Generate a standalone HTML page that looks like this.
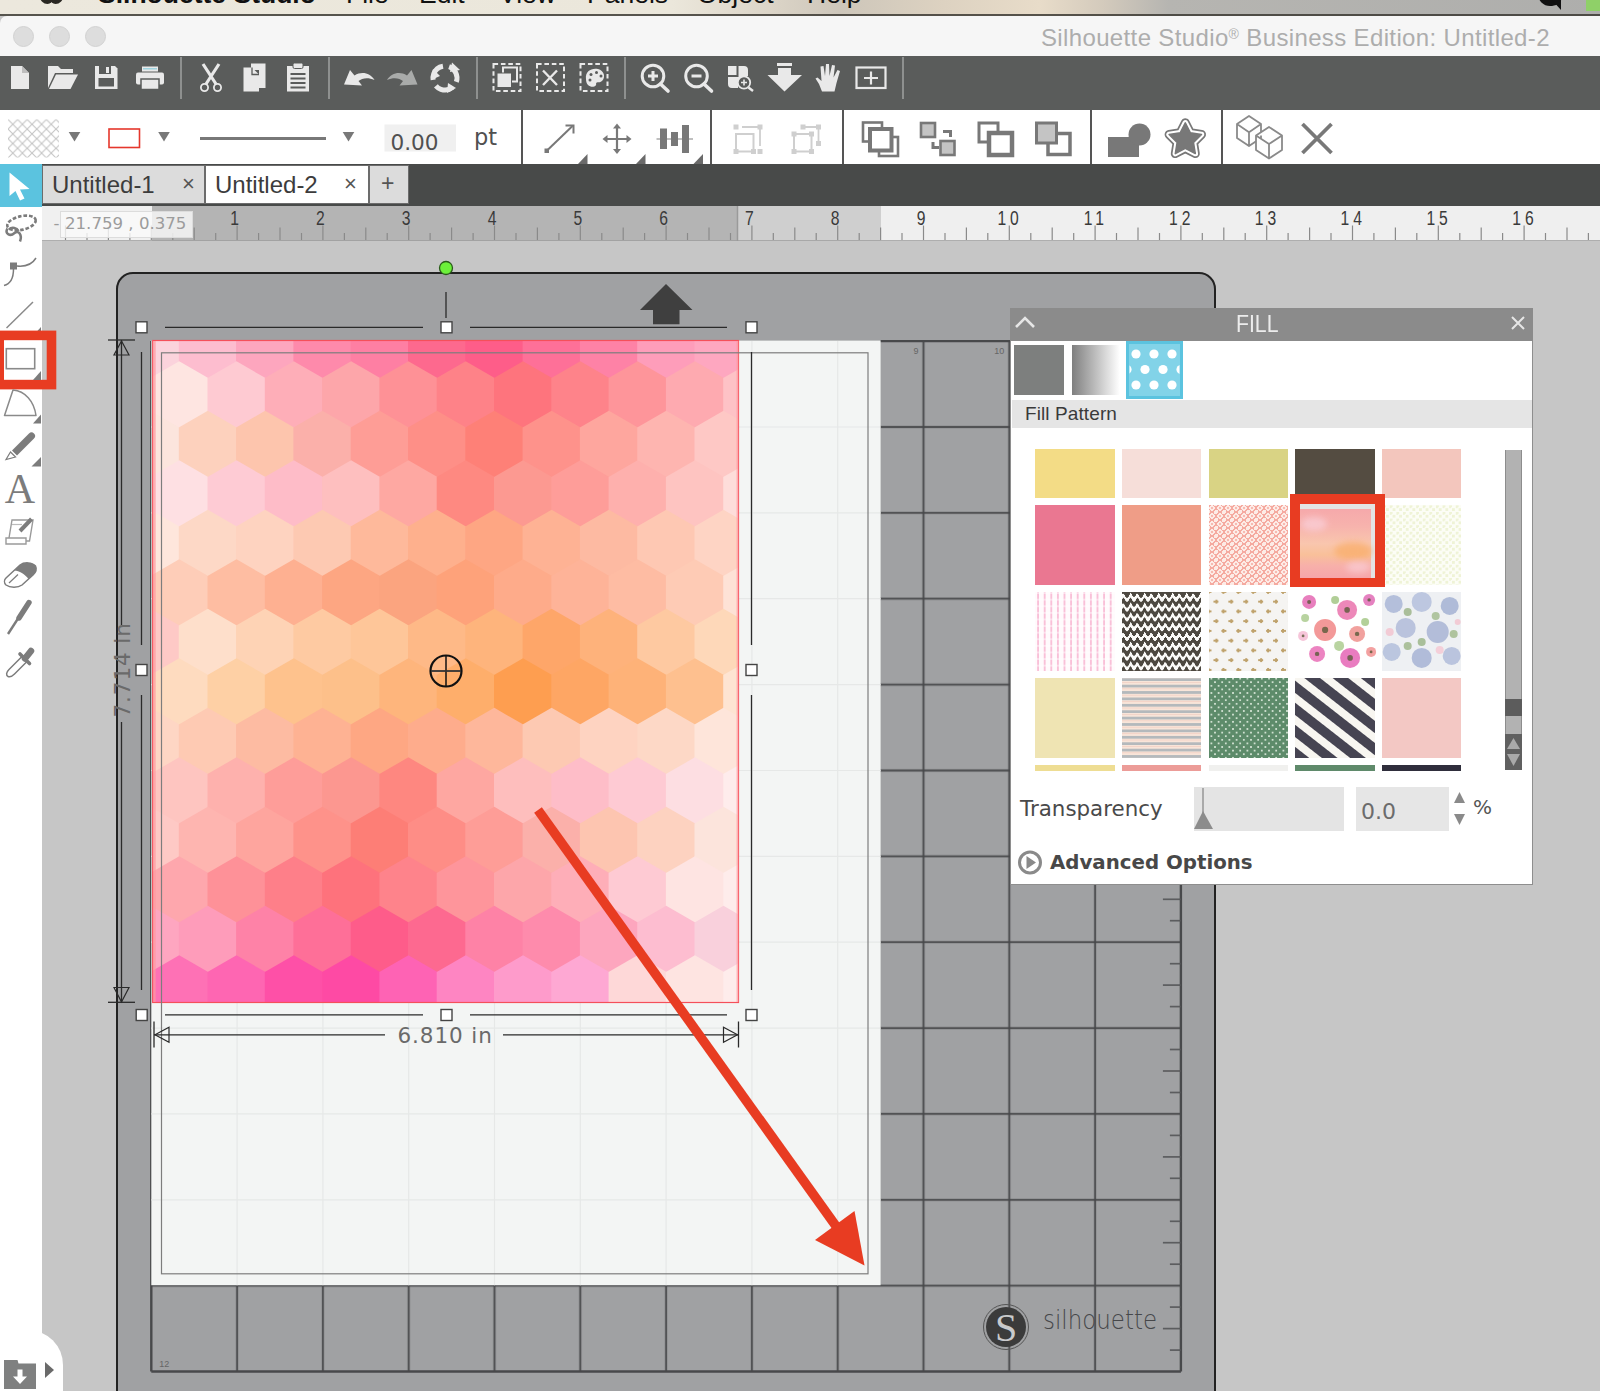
<!DOCTYPE html><html><head><meta charset="utf-8"><title>Silhouette Studio</title><style>
*{margin:0;padding:0;box-sizing:border-box}
html,body{width:1600px;height:1391px;overflow:hidden;background:#c6c6c6;font-family:"Liberation Sans",sans-serif}
#root{position:relative;width:1600px;height:1391px;overflow:hidden;background:#c6c6c6}
.abs{position:absolute}
.t{position:absolute;white-space:nowrap;line-height:1}
</style></head><body><div id="root">
<div class="abs" style="left:116.2px;top:272.4px;width:1100px;height:1200px;background:#a0a1a3;border:2.6px solid #222;border-radius:17px"></div>
<svg class="abs" style="left:0;top:0" width="1600" height="1391" viewBox="0 0 1600 1391">
<line x1="151.3" y1="341.1" x2="151.3" y2="1371.5" stroke="#48494b" stroke-width="2.4" opacity="1"/>
<line x1="151.3" y1="341.1" x2="1180.9" y2="341.1" stroke="#48494b" stroke-width="2.4" opacity="1"/>
<line x1="237.1" y1="341.1" x2="237.1" y2="1371.5" stroke="#48494b" stroke-width="1.8" opacity="0.85"/>
<line x1="151.3" y1="427.0" x2="1180.9" y2="427.0" stroke="#48494b" stroke-width="1.8" opacity="0.85"/>
<line x1="322.9" y1="341.1" x2="322.9" y2="1371.5" stroke="#48494b" stroke-width="1.8" opacity="0.85"/>
<line x1="151.3" y1="512.8" x2="1180.9" y2="512.8" stroke="#48494b" stroke-width="1.8" opacity="0.85"/>
<line x1="408.7" y1="341.1" x2="408.7" y2="1371.5" stroke="#48494b" stroke-width="1.8" opacity="0.85"/>
<line x1="151.3" y1="598.7" x2="1180.9" y2="598.7" stroke="#48494b" stroke-width="1.8" opacity="0.85"/>
<line x1="494.5" y1="341.1" x2="494.5" y2="1371.5" stroke="#48494b" stroke-width="1.8" opacity="0.85"/>
<line x1="151.3" y1="684.6" x2="1180.9" y2="684.6" stroke="#48494b" stroke-width="1.8" opacity="0.85"/>
<line x1="580.3" y1="341.1" x2="580.3" y2="1371.5" stroke="#48494b" stroke-width="1.8" opacity="0.85"/>
<line x1="151.3" y1="770.5" x2="1180.9" y2="770.5" stroke="#48494b" stroke-width="1.8" opacity="0.85"/>
<line x1="666.1" y1="341.1" x2="666.1" y2="1371.5" stroke="#48494b" stroke-width="1.8" opacity="0.85"/>
<line x1="151.3" y1="856.3" x2="1180.9" y2="856.3" stroke="#48494b" stroke-width="1.8" opacity="0.85"/>
<line x1="751.9" y1="341.1" x2="751.9" y2="1371.5" stroke="#48494b" stroke-width="1.8" opacity="0.85"/>
<line x1="151.3" y1="942.2" x2="1180.9" y2="942.2" stroke="#48494b" stroke-width="1.8" opacity="0.85"/>
<line x1="837.7" y1="341.1" x2="837.7" y2="1371.5" stroke="#48494b" stroke-width="1.8" opacity="0.85"/>
<line x1="151.3" y1="1028.1" x2="1180.9" y2="1028.1" stroke="#48494b" stroke-width="1.8" opacity="0.85"/>
<line x1="923.5" y1="341.1" x2="923.5" y2="1371.5" stroke="#48494b" stroke-width="1.8" opacity="0.85"/>
<line x1="151.3" y1="1113.9" x2="1180.9" y2="1113.9" stroke="#48494b" stroke-width="1.8" opacity="0.85"/>
<line x1="1009.3" y1="341.1" x2="1009.3" y2="1371.5" stroke="#48494b" stroke-width="1.8" opacity="0.85"/>
<line x1="151.3" y1="1199.8" x2="1180.9" y2="1199.8" stroke="#48494b" stroke-width="1.8" opacity="0.85"/>
<line x1="1095.1" y1="341.1" x2="1095.1" y2="1371.5" stroke="#48494b" stroke-width="1.8" opacity="0.85"/>
<line x1="151.3" y1="1285.7" x2="1180.9" y2="1285.7" stroke="#48494b" stroke-width="1.8" opacity="0.85"/>
<line x1="1180.9" y1="341.1" x2="1180.9" y2="1371.5" stroke="#48494b" stroke-width="2.4" opacity="1"/>
<line x1="151.3" y1="1371.5" x2="1180.9" y2="1371.5" stroke="#48494b" stroke-width="2.4" opacity="1"/>
<line x1="237.1" y1="341.1" x2="237.1" y2="1371.5" stroke="#48494b" stroke-width="3.6" opacity=".16"/>
<line x1="151.3" y1="427.0" x2="1180.9" y2="427.0" stroke="#48494b" stroke-width="3.6" opacity=".16"/>
<line x1="322.9" y1="341.1" x2="322.9" y2="1371.5" stroke="#48494b" stroke-width="3.6" opacity=".16"/>
<line x1="151.3" y1="512.8" x2="1180.9" y2="512.8" stroke="#48494b" stroke-width="3.6" opacity=".16"/>
<line x1="408.7" y1="341.1" x2="408.7" y2="1371.5" stroke="#48494b" stroke-width="3.6" opacity=".16"/>
<line x1="151.3" y1="598.7" x2="1180.9" y2="598.7" stroke="#48494b" stroke-width="3.6" opacity=".16"/>
<line x1="494.5" y1="341.1" x2="494.5" y2="1371.5" stroke="#48494b" stroke-width="3.6" opacity=".16"/>
<line x1="151.3" y1="684.6" x2="1180.9" y2="684.6" stroke="#48494b" stroke-width="3.6" opacity=".16"/>
<line x1="580.3" y1="341.1" x2="580.3" y2="1371.5" stroke="#48494b" stroke-width="3.6" opacity=".16"/>
<line x1="151.3" y1="770.5" x2="1180.9" y2="770.5" stroke="#48494b" stroke-width="3.6" opacity=".16"/>
<line x1="666.1" y1="341.1" x2="666.1" y2="1371.5" stroke="#48494b" stroke-width="3.6" opacity=".16"/>
<line x1="151.3" y1="856.3" x2="1180.9" y2="856.3" stroke="#48494b" stroke-width="3.6" opacity=".16"/>
<line x1="751.9" y1="341.1" x2="751.9" y2="1371.5" stroke="#48494b" stroke-width="3.6" opacity=".16"/>
<line x1="151.3" y1="942.2" x2="1180.9" y2="942.2" stroke="#48494b" stroke-width="3.6" opacity=".16"/>
<line x1="837.7" y1="341.1" x2="837.7" y2="1371.5" stroke="#48494b" stroke-width="3.6" opacity=".16"/>
<line x1="151.3" y1="1028.1" x2="1180.9" y2="1028.1" stroke="#48494b" stroke-width="3.6" opacity=".16"/>
<line x1="923.5" y1="341.1" x2="923.5" y2="1371.5" stroke="#48494b" stroke-width="3.6" opacity=".16"/>
<line x1="151.3" y1="1113.9" x2="1180.9" y2="1113.9" stroke="#48494b" stroke-width="3.6" opacity=".16"/>
<line x1="1009.3" y1="341.1" x2="1009.3" y2="1371.5" stroke="#48494b" stroke-width="3.6" opacity=".16"/>
<line x1="151.3" y1="1199.8" x2="1180.9" y2="1199.8" stroke="#48494b" stroke-width="3.6" opacity=".16"/>
<line x1="1095.1" y1="341.1" x2="1095.1" y2="1371.5" stroke="#48494b" stroke-width="3.6" opacity=".16"/>
<line x1="151.3" y1="1285.7" x2="1180.9" y2="1285.7" stroke="#48494b" stroke-width="3.6" opacity=".16"/>
<line x1="1169.9" y1="362.6" x2="1180.9" y2="362.6" stroke="#555658" stroke-width="1.7" opacity=".9"/>
<line x1="1162.9" y1="384.0" x2="1180.9" y2="384.0" stroke="#555658" stroke-width="1.7" opacity=".9"/>
<line x1="1169.9" y1="405.5" x2="1180.9" y2="405.5" stroke="#555658" stroke-width="1.7" opacity=".9"/>
<line x1="1169.9" y1="448.4" x2="1180.9" y2="448.4" stroke="#555658" stroke-width="1.7" opacity=".9"/>
<line x1="1162.9" y1="469.9" x2="1180.9" y2="469.9" stroke="#555658" stroke-width="1.7" opacity=".9"/>
<line x1="1169.9" y1="491.4" x2="1180.9" y2="491.4" stroke="#555658" stroke-width="1.7" opacity=".9"/>
<line x1="1169.9" y1="534.3" x2="1180.9" y2="534.3" stroke="#555658" stroke-width="1.7" opacity=".9"/>
<line x1="1162.9" y1="555.8" x2="1180.9" y2="555.8" stroke="#555658" stroke-width="1.7" opacity=".9"/>
<line x1="1169.9" y1="577.2" x2="1180.9" y2="577.2" stroke="#555658" stroke-width="1.7" opacity=".9"/>
<line x1="1169.9" y1="620.2" x2="1180.9" y2="620.2" stroke="#555658" stroke-width="1.7" opacity=".9"/>
<line x1="1162.9" y1="641.6" x2="1180.9" y2="641.6" stroke="#555658" stroke-width="1.7" opacity=".9"/>
<line x1="1169.9" y1="663.1" x2="1180.9" y2="663.1" stroke="#555658" stroke-width="1.7" opacity=".9"/>
<line x1="1169.9" y1="706.0" x2="1180.9" y2="706.0" stroke="#555658" stroke-width="1.7" opacity=".9"/>
<line x1="1162.9" y1="727.5" x2="1180.9" y2="727.5" stroke="#555658" stroke-width="1.7" opacity=".9"/>
<line x1="1169.9" y1="749.0" x2="1180.9" y2="749.0" stroke="#555658" stroke-width="1.7" opacity=".9"/>
<line x1="1169.9" y1="791.9" x2="1180.9" y2="791.9" stroke="#555658" stroke-width="1.7" opacity=".9"/>
<line x1="1162.9" y1="813.4" x2="1180.9" y2="813.4" stroke="#555658" stroke-width="1.7" opacity=".9"/>
<line x1="1169.9" y1="834.9" x2="1180.9" y2="834.9" stroke="#555658" stroke-width="1.7" opacity=".9"/>
<line x1="1169.9" y1="877.8" x2="1180.9" y2="877.8" stroke="#555658" stroke-width="1.7" opacity=".9"/>
<line x1="1162.9" y1="899.3" x2="1180.9" y2="899.3" stroke="#555658" stroke-width="1.7" opacity=".9"/>
<line x1="1169.9" y1="920.7" x2="1180.9" y2="920.7" stroke="#555658" stroke-width="1.7" opacity=".9"/>
<line x1="1169.9" y1="963.7" x2="1180.9" y2="963.7" stroke="#555658" stroke-width="1.7" opacity=".9"/>
<line x1="1162.9" y1="985.1" x2="1180.9" y2="985.1" stroke="#555658" stroke-width="1.7" opacity=".9"/>
<line x1="1169.9" y1="1006.6" x2="1180.9" y2="1006.6" stroke="#555658" stroke-width="1.7" opacity=".9"/>
<line x1="1169.9" y1="1049.5" x2="1180.9" y2="1049.5" stroke="#555658" stroke-width="1.7" opacity=".9"/>
<line x1="1162.9" y1="1071.0" x2="1180.9" y2="1071.0" stroke="#555658" stroke-width="1.7" opacity=".9"/>
<line x1="1169.9" y1="1092.5" x2="1180.9" y2="1092.5" stroke="#555658" stroke-width="1.7" opacity=".9"/>
<line x1="1169.9" y1="1135.4" x2="1180.9" y2="1135.4" stroke="#555658" stroke-width="1.7" opacity=".9"/>
<line x1="1162.9" y1="1156.9" x2="1180.9" y2="1156.9" stroke="#555658" stroke-width="1.7" opacity=".9"/>
<line x1="1169.9" y1="1178.3" x2="1180.9" y2="1178.3" stroke="#555658" stroke-width="1.7" opacity=".9"/>
<line x1="1169.9" y1="1221.3" x2="1180.9" y2="1221.3" stroke="#555658" stroke-width="1.7" opacity=".9"/>
<line x1="1162.9" y1="1242.7" x2="1180.9" y2="1242.7" stroke="#555658" stroke-width="1.7" opacity=".9"/>
<line x1="1169.9" y1="1264.2" x2="1180.9" y2="1264.2" stroke="#555658" stroke-width="1.7" opacity=".9"/>
<line x1="1169.9" y1="1307.1" x2="1180.9" y2="1307.1" stroke="#555658" stroke-width="1.7" opacity=".9"/>
<line x1="1162.9" y1="1328.6" x2="1180.9" y2="1328.6" stroke="#555658" stroke-width="1.7" opacity=".9"/>
<line x1="1169.9" y1="1350.1" x2="1180.9" y2="1350.1" stroke="#555658" stroke-width="1.7" opacity=".9"/>
<text x="232.1" y="354.1" font-size="9" fill="#666" text-anchor="end" font-family="Liberation Sans, sans-serif">1</text>
<text x="317.9" y="354.1" font-size="9" fill="#666" text-anchor="end" font-family="Liberation Sans, sans-serif">2</text>
<text x="403.7" y="354.1" font-size="9" fill="#666" text-anchor="end" font-family="Liberation Sans, sans-serif">3</text>
<text x="489.5" y="354.1" font-size="9" fill="#666" text-anchor="end" font-family="Liberation Sans, sans-serif">4</text>
<text x="575.3" y="354.1" font-size="9" fill="#666" text-anchor="end" font-family="Liberation Sans, sans-serif">5</text>
<text x="661.1" y="354.1" font-size="9" fill="#666" text-anchor="end" font-family="Liberation Sans, sans-serif">6</text>
<text x="746.9" y="354.1" font-size="9" fill="#666" text-anchor="end" font-family="Liberation Sans, sans-serif">7</text>
<text x="832.7" y="354.1" font-size="9" fill="#666" text-anchor="end" font-family="Liberation Sans, sans-serif">8</text>
<text x="918.5" y="354.1" font-size="9" fill="#666" text-anchor="end" font-family="Liberation Sans, sans-serif">9</text>
<text x="1004.3" y="354.1" font-size="9" fill="#666" text-anchor="end" font-family="Liberation Sans, sans-serif">10</text>
<text x="1090.1" y="354.1" font-size="9" fill="#666" text-anchor="end" font-family="Liberation Sans, sans-serif">11</text>
<text x="1175.9" y="354.1" font-size="9" fill="#666" text-anchor="end" font-family="Liberation Sans, sans-serif">12</text>
<text x="159.3" y="422.0" font-size="9" fill="#666" font-family="Liberation Sans, sans-serif">1</text>
<text x="159.3" y="507.8" font-size="9" fill="#666" font-family="Liberation Sans, sans-serif">2</text>
<text x="159.3" y="593.7" font-size="9" fill="#666" font-family="Liberation Sans, sans-serif">3</text>
<text x="159.3" y="679.6" font-size="9" fill="#666" font-family="Liberation Sans, sans-serif">4</text>
<text x="159.3" y="765.5" font-size="9" fill="#666" font-family="Liberation Sans, sans-serif">5</text>
<text x="159.3" y="851.3" font-size="9" fill="#666" font-family="Liberation Sans, sans-serif">6</text>
<text x="159.3" y="937.2" font-size="9" fill="#666" font-family="Liberation Sans, sans-serif">7</text>
<text x="159.3" y="1023.1" font-size="9" fill="#666" font-family="Liberation Sans, sans-serif">8</text>
<text x="159.3" y="1108.9" font-size="9" fill="#666" font-family="Liberation Sans, sans-serif">9</text>
<text x="159.3" y="1194.8" font-size="9" fill="#666" font-family="Liberation Sans, sans-serif">10</text>
<text x="159.3" y="1280.7" font-size="9" fill="#666" font-family="Liberation Sans, sans-serif">11</text>
<text x="159.3" y="1366.5" font-size="9" fill="#666" font-family="Liberation Sans, sans-serif">12</text>
<rect x="151.3" y="340.3" width="729.3" height="944.9" fill="#f3f5f4"/>
<line x1="237.1" y1="341.1" x2="237.1" y2="1285.2" stroke="#e6e8e7" stroke-width="1.2"/>
<line x1="322.9" y1="341.1" x2="322.9" y2="1285.2" stroke="#e6e8e7" stroke-width="1.2"/>
<line x1="408.7" y1="341.1" x2="408.7" y2="1285.2" stroke="#e6e8e7" stroke-width="1.2"/>
<line x1="494.5" y1="341.1" x2="494.5" y2="1285.2" stroke="#e6e8e7" stroke-width="1.2"/>
<line x1="580.3" y1="341.1" x2="580.3" y2="1285.2" stroke="#e6e8e7" stroke-width="1.2"/>
<line x1="666.1" y1="341.1" x2="666.1" y2="1285.2" stroke="#e6e8e7" stroke-width="1.2"/>
<line x1="751.9" y1="341.1" x2="751.9" y2="1285.2" stroke="#e6e8e7" stroke-width="1.2"/>
<line x1="837.7" y1="341.1" x2="837.7" y2="1285.2" stroke="#e6e8e7" stroke-width="1.2"/>
<line x1="151.3" y1="427.0" x2="880.6" y2="427.0" stroke="#e6e8e7" stroke-width="1.2"/>
<line x1="151.3" y1="512.8" x2="880.6" y2="512.8" stroke="#e6e8e7" stroke-width="1.2"/>
<line x1="151.3" y1="598.7" x2="880.6" y2="598.7" stroke="#e6e8e7" stroke-width="1.2"/>
<line x1="151.3" y1="684.6" x2="880.6" y2="684.6" stroke="#e6e8e7" stroke-width="1.2"/>
<line x1="151.3" y1="770.5" x2="880.6" y2="770.5" stroke="#e6e8e7" stroke-width="1.2"/>
<line x1="151.3" y1="856.3" x2="880.6" y2="856.3" stroke="#e6e8e7" stroke-width="1.2"/>
<line x1="151.3" y1="942.2" x2="880.6" y2="942.2" stroke="#e6e8e7" stroke-width="1.2"/>
<line x1="151.3" y1="1028.1" x2="880.6" y2="1028.1" stroke="#e6e8e7" stroke-width="1.2"/>
<line x1="151.3" y1="1113.9" x2="880.6" y2="1113.9" stroke="#e6e8e7" stroke-width="1.2"/>
<line x1="151.3" y1="1199.8" x2="880.6" y2="1199.8" stroke="#e6e8e7" stroke-width="1.2"/>
<defs><clipPath id="pc"><rect x="152.2" y="340.0" width="586.8" height="663.0"/></clipPath></defs>
<g clip-path="url(#pc)" shape-rendering="geometricPrecision">
<rect x="152.2" y="340.0" width="586.8" height="663.0" fill="#feb0a0"/>
<polygon points="150.5,311.8 179.5,328.6 179.5,362.0 150.5,378.8 121.5,362.0 121.5,328.6" fill="#fbd3dc"/>
<polygon points="207.8,311.8 236.8,328.6 236.8,362.0 207.8,378.8 178.8,362.0 178.8,328.6" fill="#fdbdcf"/>
<polygon points="265.1,311.8 294.1,328.6 294.1,362.0 265.1,378.8 236.1,362.0 236.1,328.6" fill="#fda6be"/>
<polygon points="322.4,311.8 351.4,328.6 351.4,362.0 322.4,378.8 293.4,362.0 293.4,328.6" fill="#fe8aab"/>
<polygon points="379.7,311.8 408.7,328.6 408.7,362.0 379.7,378.8 350.7,362.0 350.7,328.6" fill="#fe7fa3"/>
<polygon points="437.0,311.8 466.0,328.6 466.0,362.0 437.0,378.8 408.0,362.0 408.0,328.6" fill="#fd698e"/>
<polygon points="494.3,311.8 523.3,328.6 523.3,362.0 494.3,378.8 465.3,362.0 465.3,328.6" fill="#fe5d89"/>
<polygon points="551.6,311.8 580.6,328.6 580.6,362.0 551.6,378.8 522.6,362.0 522.6,328.6" fill="#fe7098"/>
<polygon points="608.9,311.8 637.9,328.6 637.9,362.0 608.9,378.8 579.9,362.0 579.9,328.6" fill="#fe82a6"/>
<polygon points="666.2,311.8 695.2,328.6 695.2,362.0 666.2,378.8 637.2,362.0 637.2,328.6" fill="#fe9dba"/>
<polygon points="723.5,311.8 752.5,328.6 752.5,362.0 723.5,378.8 694.5,362.0 694.5,328.6" fill="#fea7c0"/>
<polygon points="179.2,361.3 208.2,378.1 208.2,411.5 179.2,428.3 150.2,411.5 150.2,378.1" fill="#fee5e1"/>
<polygon points="236.5,361.3 265.5,378.1 265.5,411.5 236.5,428.3 207.5,411.5 207.5,378.1" fill="#fecad2"/>
<polygon points="293.8,361.3 322.8,378.1 322.8,411.5 293.8,428.3 264.8,411.5 264.8,378.1" fill="#feaeb8"/>
<polygon points="351.1,361.3 380.1,378.1 380.1,411.5 351.1,428.3 322.1,411.5 322.1,378.1" fill="#fda6aa"/>
<polygon points="408.4,361.3 437.4,378.1 437.4,411.5 408.4,428.3 379.4,411.5 379.4,378.1" fill="#fe9196"/>
<polygon points="465.7,361.3 494.7,378.1 494.7,411.5 465.7,428.3 436.7,411.5 436.7,378.1" fill="#fe8288"/>
<polygon points="523.0,361.3 552.0,378.1 552.0,411.5 523.0,428.3 494.0,411.5 494.0,378.1" fill="#fe747d"/>
<polygon points="580.3,361.3 609.3,378.1 609.3,411.5 580.3,428.3 551.3,411.5 551.3,378.1" fill="#fe838a"/>
<polygon points="637.6,361.3 666.6,378.1 666.6,411.5 637.6,428.3 608.6,411.5 608.6,378.1" fill="#fe959a"/>
<polygon points="694.9,361.3 723.9,378.1 723.9,411.5 694.9,428.3 665.9,411.5 665.9,378.1" fill="#feaab0"/>
<polygon points="752.2,361.3 781.2,378.1 781.2,411.5 752.2,428.3 723.2,411.5 723.2,378.1" fill="#fec2c6"/>
<polygon points="150.5,410.8 179.5,427.6 179.5,461.0 150.5,477.8 121.5,461.0 121.5,427.6" fill="#fce5dd"/>
<polygon points="207.8,410.8 236.8,427.6 236.8,461.0 207.8,477.8 178.8,461.0 178.8,427.6" fill="#fdd1bd"/>
<polygon points="265.1,410.8 294.1,427.6 294.1,461.0 265.1,477.8 236.1,461.0 236.1,427.6" fill="#fdc5ad"/>
<polygon points="322.4,410.8 351.4,427.6 351.4,461.0 322.4,477.8 293.4,461.0 293.4,427.6" fill="#fbb0aa"/>
<polygon points="379.7,410.8 408.7,427.6 408.7,461.0 379.7,477.8 350.7,461.0 350.7,427.6" fill="#fe9d96"/>
<polygon points="437.0,410.8 466.0,427.6 466.0,461.0 437.0,477.8 408.0,461.0 408.0,427.6" fill="#fe8f87"/>
<polygon points="494.3,410.8 523.3,427.6 523.3,461.0 494.3,477.8 465.3,461.0 465.3,427.6" fill="#fe8077"/>
<polygon points="551.6,410.8 580.6,427.6 580.6,461.0 551.6,477.8 522.6,461.0 522.6,427.6" fill="#fe928b"/>
<polygon points="608.9,410.8 637.9,427.6 637.9,461.0 608.9,477.8 579.9,461.0 579.9,427.6" fill="#fea69e"/>
<polygon points="666.2,410.8 695.2,427.6 695.2,461.0 666.2,477.8 637.2,461.0 637.2,427.6" fill="#feb5b0"/>
<polygon points="723.5,410.8 752.5,427.6 752.5,461.0 723.5,477.8 694.5,461.0 694.5,427.6" fill="#fec8c5"/>
<polygon points="179.2,460.3 208.2,477.1 208.2,510.5 179.2,527.3 150.2,510.5 150.2,477.1" fill="#fee0e3"/>
<polygon points="236.5,460.3 265.5,477.1 265.5,510.5 236.5,527.3 207.5,510.5 207.5,477.1" fill="#fecbd4"/>
<polygon points="293.8,460.3 322.8,477.1 322.8,510.5 293.8,527.3 264.8,510.5 264.8,477.1" fill="#febcc8"/>
<polygon points="351.1,460.3 380.1,477.1 380.1,510.5 351.1,527.3 322.1,510.5 322.1,477.1" fill="#febfbf"/>
<polygon points="408.4,460.3 437.4,477.1 437.4,510.5 408.4,527.3 379.4,510.5 379.4,477.1" fill="#fea8a2"/>
<polygon points="465.7,460.3 494.7,477.1 494.7,510.5 465.7,527.3 436.7,510.5 436.7,477.1" fill="#fe8981"/>
<polygon points="523.0,460.3 552.0,477.1 552.0,510.5 523.0,527.3 494.0,510.5 494.0,477.1" fill="#fc9991"/>
<polygon points="580.3,460.3 609.3,477.1 609.3,510.5 580.3,527.3 551.3,510.5 551.3,477.1" fill="#fe9d99"/>
<polygon points="637.6,460.3 666.6,477.1 666.6,510.5 637.6,527.3 608.6,510.5 608.6,477.1" fill="#feb0ad"/>
<polygon points="694.9,460.3 723.9,477.1 723.9,510.5 694.9,527.3 665.9,510.5 665.9,477.1" fill="#fec4c1"/>
<polygon points="752.2,460.3 781.2,477.1 781.2,510.5 752.2,527.3 723.2,510.5 723.2,477.1" fill="#feddda"/>
<polygon points="150.5,509.8 179.5,526.6 179.5,560.0 150.5,576.8 121.5,560.0 121.5,526.6" fill="#fee6dc"/>
<polygon points="207.8,509.8 236.8,526.6 236.8,560.0 207.8,576.8 178.8,560.0 178.8,526.6" fill="#fdd8c6"/>
<polygon points="265.1,509.8 294.1,526.6 294.1,560.0 265.1,576.8 236.1,560.0 236.1,526.6" fill="#fed3c0"/>
<polygon points="322.4,509.8 351.4,526.6 351.4,560.0 322.4,576.8 293.4,560.0 293.4,526.6" fill="#fdc9b2"/>
<polygon points="379.7,509.8 408.7,526.6 408.7,560.0 379.7,576.8 350.7,560.0 350.7,526.6" fill="#feb99b"/>
<polygon points="437.0,509.8 466.0,526.6 466.0,560.0 437.0,576.8 408.0,560.0 408.0,526.6" fill="#feb08d"/>
<polygon points="494.3,509.8 523.3,526.6 523.3,560.0 494.3,576.8 465.3,560.0 465.3,526.6" fill="#fea683"/>
<polygon points="551.6,509.8 580.6,526.6 580.6,560.0 551.6,576.8 522.6,560.0 522.6,526.6" fill="#feb294"/>
<polygon points="608.9,509.8 637.9,526.6 637.9,560.0 608.9,576.8 579.9,560.0 579.9,526.6" fill="#fdbaa2"/>
<polygon points="666.2,509.8 695.2,526.6 695.2,560.0 666.2,576.8 637.2,560.0 637.2,526.6" fill="#fec8b3"/>
<polygon points="723.5,509.8 752.5,526.6 752.5,560.0 723.5,576.8 694.5,560.0 694.5,526.6" fill="#fed4c4"/>
<polygon points="179.2,559.3 208.2,576.1 208.2,609.5 179.2,626.3 150.2,609.5 150.2,576.1" fill="#fecdb8"/>
<polygon points="236.5,559.3 265.5,576.1 265.5,609.5 236.5,626.3 207.5,609.5 207.5,576.1" fill="#febda2"/>
<polygon points="293.8,559.3 322.8,576.1 322.8,609.5 293.8,626.3 264.8,609.5 264.8,576.1" fill="#feb091"/>
<polygon points="351.1,559.3 380.1,576.1 380.1,609.5 351.1,626.3 322.1,609.5 322.1,576.1" fill="#fda682"/>
<polygon points="408.4,559.3 437.4,576.1 437.4,609.5 408.4,626.3 379.4,609.5 379.4,576.1" fill="#fba47f"/>
<polygon points="465.7,559.3 494.7,576.1 494.7,609.5 465.7,626.3 436.7,609.5 436.7,576.1" fill="#fea27a"/>
<polygon points="523.0,559.3 552.0,576.1 552.0,609.5 523.0,626.3 494.0,609.5 494.0,576.1" fill="#feab8a"/>
<polygon points="580.3,559.3 609.3,576.1 609.3,609.5 580.3,626.3 551.3,609.5 551.3,576.1" fill="#feb398"/>
<polygon points="637.6,559.3 666.6,576.1 666.6,609.5 637.6,626.3 608.6,609.5 608.6,576.1" fill="#febca3"/>
<polygon points="694.9,559.3 723.9,576.1 723.9,609.5 694.9,626.3 665.9,609.5 665.9,576.1" fill="#fecbb5"/>
<polygon points="752.2,559.3 781.2,576.1 781.2,609.5 752.2,626.3 723.2,609.5 723.2,576.1" fill="#fee2d6"/>
<polygon points="150.5,608.8 179.5,625.6 179.5,659.0 150.5,675.8 121.5,659.0 121.5,625.6" fill="#fec9c6"/>
<polygon points="207.8,608.8 236.8,625.6 236.8,659.0 207.8,675.8 178.8,659.0 178.8,625.6" fill="#fedfcb"/>
<polygon points="265.1,608.8 294.1,625.6 294.1,659.0 265.1,675.8 236.1,659.0 236.1,625.6" fill="#fed3b5"/>
<polygon points="322.4,608.8 351.4,625.6 351.4,659.0 322.4,675.8 293.4,659.0 293.4,625.6" fill="#fecaa2"/>
<polygon points="379.7,608.8 408.7,625.6 408.7,659.0 379.7,675.8 350.7,659.0 350.7,625.6" fill="#fec699"/>
<polygon points="437.0,608.8 466.0,625.6 466.0,659.0 437.0,675.8 408.0,659.0 408.0,625.6" fill="#feb987"/>
<polygon points="494.3,608.8 523.3,625.6 523.3,659.0 494.3,675.8 465.3,659.0 465.3,625.6" fill="#feb47c"/>
<polygon points="551.6,608.8 580.6,625.6 580.6,659.0 551.6,675.8 522.6,659.0 522.6,625.6" fill="#fea669"/>
<polygon points="608.9,608.8 637.9,625.6 637.9,659.0 608.9,675.8 579.9,659.0 579.9,625.6" fill="#feb27b"/>
<polygon points="666.2,608.8 695.2,625.6 695.2,659.0 666.2,675.8 637.2,659.0 637.2,625.6" fill="#fec9a1"/>
<polygon points="723.5,608.8 752.5,625.6 752.5,659.0 723.5,675.8 694.5,659.0 694.5,625.6" fill="#fed8b9"/>
<polygon points="179.2,658.3 208.2,675.1 208.2,708.5 179.2,725.3 150.2,708.5 150.2,675.1" fill="#fedbbf"/>
<polygon points="236.5,658.3 265.5,675.1 265.5,708.5 236.5,725.3 207.5,708.5 207.5,675.1" fill="#fed0a5"/>
<polygon points="293.8,658.3 322.8,675.1 322.8,708.5 293.8,725.3 264.8,708.5 264.8,675.1" fill="#fec28d"/>
<polygon points="351.1,658.3 380.1,675.1 380.1,708.5 351.1,725.3 322.1,708.5 322.1,675.1" fill="#fdc08a"/>
<polygon points="408.4,658.3 437.4,675.1 437.4,708.5 408.4,725.3 379.4,708.5 379.4,675.1" fill="#feb57c"/>
<polygon points="465.7,658.3 494.7,675.1 494.7,708.5 465.7,725.3 436.7,708.5 436.7,675.1" fill="#feae6b"/>
<polygon points="523.0,658.3 552.0,675.1 552.0,708.5 523.0,725.3 494.0,708.5 494.0,675.1" fill="#fe9e50"/>
<polygon points="580.3,658.3 609.3,675.1 609.3,708.5 580.3,725.3 551.3,708.5 551.3,675.1" fill="#fea664"/>
<polygon points="637.6,658.3 666.6,675.1 666.6,708.5 637.6,725.3 608.6,708.5 608.6,675.1" fill="#feb278"/>
<polygon points="694.9,658.3 723.9,675.1 723.9,708.5 694.9,725.3 665.9,708.5 665.9,675.1" fill="#fec08f"/>
<polygon points="752.2,658.3 781.2,675.1 781.2,708.5 752.2,725.3 723.2,708.5 723.2,675.1" fill="#fee4d2"/>
<polygon points="150.5,707.8 179.5,724.6 179.5,758.0 150.5,774.8 121.5,758.0 121.5,724.6" fill="#fed6c4"/>
<polygon points="207.8,707.8 236.8,724.6 236.8,758.0 207.8,774.8 178.8,758.0 178.8,724.6" fill="#fecab3"/>
<polygon points="265.1,707.8 294.1,724.6 294.1,758.0 265.1,774.8 236.1,758.0 236.1,724.6" fill="#fdbba2"/>
<polygon points="322.4,707.8 351.4,724.6 351.4,758.0 322.4,774.8 293.4,758.0 293.4,724.6" fill="#feb293"/>
<polygon points="379.7,707.8 408.7,724.6 408.7,758.0 379.7,774.8 350.7,758.0 350.7,724.6" fill="#fea783"/>
<polygon points="437.0,707.8 466.0,724.6 466.0,758.0 437.0,774.8 408.0,758.0 408.0,724.6" fill="#feac8c"/>
<polygon points="494.3,707.8 523.3,724.6 523.3,758.0 494.3,774.8 465.3,758.0 465.3,724.6" fill="#feb79b"/>
<polygon points="551.6,707.8 580.6,724.6 580.6,758.0 551.6,774.8 522.6,758.0 522.6,724.6" fill="#fdc9b2"/>
<polygon points="608.9,707.8 637.9,724.6 637.9,758.0 608.9,774.8 579.9,758.0 579.9,724.6" fill="#fed3c1"/>
<polygon points="666.2,707.8 695.2,724.6 695.2,758.0 666.2,774.8 637.2,758.0 637.2,724.6" fill="#fdd8c6"/>
<polygon points="723.5,707.8 752.5,724.6 752.5,758.0 723.5,774.8 694.5,758.0 694.5,724.6" fill="#fee5da"/>
<polygon points="179.2,757.3 208.2,774.1 208.2,807.5 179.2,824.3 150.2,807.5 150.2,774.1" fill="#fec5c0"/>
<polygon points="236.5,757.3 265.5,774.1 265.5,807.5 236.5,824.3 207.5,807.5 207.5,774.1" fill="#feb1ad"/>
<polygon points="293.8,757.3 322.8,774.1 322.8,807.5 293.8,824.3 264.8,807.5 264.8,774.1" fill="#fe9d99"/>
<polygon points="351.1,757.3 380.1,774.1 380.1,807.5 351.1,824.3 322.1,807.5 322.1,774.1" fill="#fc9790"/>
<polygon points="408.4,757.3 437.4,774.1 437.4,807.5 408.4,824.3 379.4,807.5 379.4,774.1" fill="#fe8780"/>
<polygon points="465.7,757.3 494.7,774.1 494.7,807.5 465.7,824.3 436.7,807.5 436.7,774.1" fill="#fea7a1"/>
<polygon points="523.0,757.3 552.0,774.1 552.0,807.5 523.0,824.3 494.0,807.5 494.0,774.1" fill="#febebd"/>
<polygon points="580.3,757.3 609.3,774.1 609.3,807.5 580.3,824.3 551.3,807.5 551.3,774.1" fill="#febdc8"/>
<polygon points="637.6,757.3 666.6,774.1 666.6,807.5 637.6,824.3 608.6,807.5 608.6,774.1" fill="#fecad3"/>
<polygon points="694.9,757.3 723.9,774.1 723.9,807.5 694.9,824.3 665.9,807.5 665.9,774.1" fill="#fddee2"/>
<polygon points="752.2,757.3 781.2,774.1 781.2,807.5 752.2,824.3 723.2,807.5 723.2,774.1" fill="#feecec"/>
<polygon points="150.5,806.8 179.5,823.6 179.5,857.0 150.5,873.8 121.5,857.0 121.5,823.6" fill="#fec9c5"/>
<polygon points="207.8,806.8 236.8,823.6 236.8,857.0 207.8,873.8 178.8,857.0 178.8,823.6" fill="#feb5b0"/>
<polygon points="265.1,806.8 294.1,823.6 294.1,857.0 265.1,873.8 236.1,857.0 236.1,823.6" fill="#fea59e"/>
<polygon points="322.4,806.8 351.4,823.6 351.4,857.0 322.4,873.8 293.4,857.0 293.4,823.6" fill="#fe928a"/>
<polygon points="379.7,806.8 408.7,823.6 408.7,857.0 379.7,873.8 350.7,857.0 350.7,823.6" fill="#fd7e76"/>
<polygon points="437.0,806.8 466.0,823.6 466.0,857.0 437.0,873.8 408.0,857.0 408.0,823.6" fill="#fe8d86"/>
<polygon points="494.3,806.8 523.3,823.6 523.3,857.0 494.3,873.8 465.3,857.0 465.3,823.6" fill="#fe9d97"/>
<polygon points="551.6,806.8 580.6,823.6 580.6,857.0 551.6,873.8 522.6,857.0 522.6,823.6" fill="#fbb0aa"/>
<polygon points="608.9,806.8 637.9,823.6 637.9,857.0 608.9,873.8 579.9,857.0 579.9,823.6" fill="#fdc5b0"/>
<polygon points="666.2,806.8 695.2,823.6 695.2,857.0 666.2,873.8 637.2,857.0 637.2,823.6" fill="#fdd2c0"/>
<polygon points="723.5,806.8 752.5,823.6 752.5,857.0 723.5,873.8 694.5,857.0 694.5,823.6" fill="#fce4dc"/>
<polygon points="179.2,856.3 208.2,873.1 208.2,906.5 179.2,923.3 150.2,906.5 150.2,873.1" fill="#fea7ad"/>
<polygon points="236.5,856.3 265.5,873.1 265.5,906.5 236.5,923.3 207.5,906.5 207.5,873.1" fill="#fe9198"/>
<polygon points="293.8,856.3 322.8,873.1 322.8,906.5 293.8,923.3 264.8,906.5 264.8,873.1" fill="#fe7f89"/>
<polygon points="351.1,856.3 380.1,873.1 380.1,906.5 351.1,923.3 322.1,906.5 322.1,873.1" fill="#fe727c"/>
<polygon points="408.4,856.3 437.4,873.1 437.4,906.5 408.4,923.3 379.4,906.5 379.4,873.1" fill="#fe838b"/>
<polygon points="465.7,856.3 494.7,873.1 494.7,906.5 465.7,923.3 436.7,906.5 436.7,873.1" fill="#fe959b"/>
<polygon points="523.0,856.3 552.0,873.1 552.0,906.5 523.0,923.3 494.0,906.5 494.0,873.1" fill="#fda6aa"/>
<polygon points="580.3,856.3 609.3,873.1 609.3,906.5 580.3,923.3 551.3,906.5 551.3,873.1" fill="#feaeb8"/>
<polygon points="637.6,856.3 666.6,873.1 666.6,906.5 637.6,923.3 608.6,906.5 608.6,873.1" fill="#fecad3"/>
<polygon points="694.9,856.3 723.9,873.1 723.9,906.5 694.9,923.3 665.9,906.5 665.9,873.1" fill="#fee4e2"/>
<polygon points="752.2,856.3 781.2,873.1 781.2,906.5 752.2,923.3 723.2,906.5 723.2,873.1" fill="#feeceb"/>
<polygon points="150.5,905.8 179.5,922.6 179.5,956.0 150.5,972.8 121.5,956.0 121.5,922.6" fill="#fea6c0"/>
<polygon points="207.8,905.8 236.8,922.6 236.8,956.0 207.8,972.8 178.8,956.0 178.8,922.6" fill="#fe9cba"/>
<polygon points="265.1,905.8 294.1,922.6 294.1,956.0 265.1,972.8 236.1,956.0 236.1,922.6" fill="#fe82a7"/>
<polygon points="322.4,905.8 351.4,922.6 351.4,956.0 322.4,972.8 293.4,956.0 293.4,922.6" fill="#fe6f98"/>
<polygon points="379.7,905.8 408.7,922.6 408.7,956.0 379.7,972.8 350.7,956.0 350.7,922.6" fill="#fe5c8a"/>
<polygon points="437.0,905.8 466.0,922.6 466.0,956.0 437.0,972.8 408.0,956.0 408.0,922.6" fill="#fd6990"/>
<polygon points="494.3,905.8 523.3,922.6 523.3,956.0 494.3,972.8 465.3,956.0 465.3,922.6" fill="#fe82a6"/>
<polygon points="551.6,905.8 580.6,922.6 580.6,956.0 551.6,972.8 522.6,956.0 522.6,922.6" fill="#fe8bac"/>
<polygon points="608.9,905.8 637.9,922.6 637.9,956.0 608.9,972.8 579.9,956.0 579.9,922.6" fill="#fda6be"/>
<polygon points="666.2,905.8 695.2,922.6 695.2,956.0 666.2,972.8 637.2,956.0 637.2,922.6" fill="#fdbdd0"/>
<polygon points="723.5,905.8 752.5,922.6 752.5,956.0 723.5,972.8 694.5,956.0 694.5,922.6" fill="#f9d0dc"/>
<polygon points="179.2,955.3 208.2,972.1 208.2,1005.5 179.2,1022.3 150.2,1005.5 150.2,972.1" fill="#fe71b5"/>
<polygon points="236.5,955.3 265.5,972.1 265.5,1005.5 236.5,1022.3 207.5,1005.5 207.5,972.1" fill="#fe66b2"/>
<polygon points="293.8,955.3 322.8,972.1 322.8,1005.5 293.8,1022.3 264.8,1005.5 264.8,972.1" fill="#fe50a7"/>
<polygon points="351.1,955.3 380.1,972.1 380.1,1005.5 351.1,1022.3 322.1,1005.5 322.1,972.1" fill="#fe4aa4"/>
<polygon points="408.4,955.3 437.4,972.1 437.4,1005.5 408.4,1022.3 379.4,1005.5 379.4,972.1" fill="#fe63b4"/>
<polygon points="465.7,955.3 494.7,972.1 494.7,1005.5 465.7,1022.3 436.7,1005.5 436.7,972.1" fill="#fe85c2"/>
<polygon points="523.0,955.3 552.0,972.1 552.0,1005.5 523.0,1022.3 494.0,1005.5 494.0,972.1" fill="#fe9bcb"/>
<polygon points="580.3,955.3 609.3,972.1 609.3,1005.5 580.3,1022.3 551.3,1005.5 551.3,972.1" fill="#fea8d3"/>
<polygon points="637.6,955.3 666.6,972.1 666.6,1005.5 637.6,1022.3 608.6,1005.5 608.6,972.1" fill="#fed8d8"/>
<polygon points="694.9,955.3 723.9,972.1 723.9,1005.5 694.9,1022.3 665.9,1005.5 665.9,972.1" fill="#fee4e1"/>
<polygon points="752.2,955.3 781.2,972.1 781.2,1005.5 752.2,1022.3 723.2,1005.5 723.2,972.1" fill="#feeceb"/>
</g>
<rect x="152.7" y="340.5" width="585.8" height="662.0" fill="none" stroke="#f5505a" stroke-width="1.2"/>
<rect x="153.2" y="341.0" width="2.5" height="661.0" fill="#ff9aa0" opacity="0.7"/>
<rect x="736.5" y="341.0" width="2" height="661.0" fill="#ff9aa0" opacity="0.6"/>
<rect x="161.5" y="352.8" width="706.5" height="921" fill="none" stroke="#7d7d7d" stroke-width="1.2"/>
<line x1="165" y1="327.3" x2="423" y2="327.3" stroke="#2a2a2a" stroke-width="1.3"/>
<line x1="470" y1="327.3" x2="727" y2="327.3" stroke="#2a2a2a" stroke-width="1.3"/>
<line x1="165" y1="1014.8" x2="423" y2="1014.8" stroke="#2a2a2a" stroke-width="1.3"/>
<line x1="470" y1="1014.8" x2="727" y2="1014.8" stroke="#2a2a2a" stroke-width="1.3"/>
<line x1="141.5" y1="352" x2="141.5" y2="645" stroke="#2a2a2a" stroke-width="1.3"/>
<line x1="141.5" y1="695" x2="141.5" y2="990" stroke="#2a2a2a" stroke-width="1.3"/>
<line x1="751.5" y1="352" x2="751.5" y2="645" stroke="#2a2a2a" stroke-width="1.3"/>
<line x1="751.5" y1="695" x2="751.5" y2="990" stroke="#2a2a2a" stroke-width="1.3"/>
<line x1="446" y1="292" x2="446" y2="318" stroke="#2a2a2a" stroke-width="1.3"/>
<rect x="136.0" y="321.8" width="11" height="11" fill="#fff" stroke="#444" stroke-width="1.4"/>
<rect x="441.0" y="321.8" width="11" height="11" fill="#fff" stroke="#444" stroke-width="1.4"/>
<rect x="746.0" y="321.8" width="11" height="11" fill="#fff" stroke="#444" stroke-width="1.4"/>
<rect x="136.0" y="664.5" width="11" height="11" fill="#fff" stroke="#444" stroke-width="1.4"/>
<rect x="746.0" y="664.5" width="11" height="11" fill="#fff" stroke="#444" stroke-width="1.4"/>
<rect x="136.2" y="1009.5" width="11" height="11" fill="#fff" stroke="#444" stroke-width="1.4"/>
<rect x="441.0" y="1009.5" width="11" height="11" fill="#fff" stroke="#444" stroke-width="1.4"/>
<rect x="746.0" y="1009.5" width="11" height="11" fill="#fff" stroke="#444" stroke-width="1.4"/>
<circle cx="446" cy="268" r="6.5" fill="#6cf03a" stroke="#2a5a1a" stroke-width="1.3"/>
<line x1="121.5" y1="340" x2="121.5" y2="625" stroke="#2a2a2a" stroke-width="1.3"/>
<line x1="121.5" y1="722" x2="121.5" y2="1002" stroke="#2a2a2a" stroke-width="1.3"/>
<line x1="108" y1="340" x2="135" y2="340" stroke="#2a2a2a" stroke-width="1.3"/>
<line x1="108" y1="1002.3" x2="135" y2="1002.3" stroke="#2a2a2a" stroke-width="1.3"/>
<polygon points="121.5,341 114,355 129,355" fill="none" stroke="#2a2a2a" stroke-width="1.2"/>
<polygon points="121.5,1002 114,987.5 129,987.5" fill="none" stroke="#2a2a2a" stroke-width="1.2"/>
<text transform="translate(130,717.5) rotate(-90)" font-size="21.5" fill="#6a6a6a" font-family="DejaVu Sans, sans-serif" letter-spacing=".9">7.714 in</text>
<line x1="154" y1="1034.8" x2="385" y2="1034.8" stroke="#2a2a2a" stroke-width="1.3"/>
<line x1="503" y1="1034.8" x2="738" y2="1034.8" stroke="#2a2a2a" stroke-width="1.3"/>
<line x1="154" y1="1021.5" x2="154" y2="1047.5" stroke="#2a2a2a" stroke-width="1.3"/>
<line x1="738.5" y1="1021.5" x2="738.5" y2="1047.5" stroke="#2a2a2a" stroke-width="1.3"/>
<polygon points="155,1034.8 169,1027.3 169,1042.3" fill="none" stroke="#2a2a2a" stroke-width="1.2"/>
<polygon points="737.5,1034.8 723.5,1027.3 723.5,1042.3" fill="none" stroke="#2a2a2a" stroke-width="1.2"/>
<text x="397.5" y="1042.5" font-size="21.5" fill="#6a6a6a" font-family="DejaVu Sans, sans-serif" letter-spacing=".9">6.810 in</text>
<circle cx="446" cy="671" r="15.5" fill="none" stroke="#111" stroke-width="2.2"/>
<line x1="446" y1="656" x2="446" y2="686" stroke="#111" stroke-width="1.5"/>
<line x1="431" y1="671" x2="461" y2="671" stroke="#333" stroke-width="1.8"/>
<polygon points="666,284 692.5,310 679.5,310 679.5,324.2 653,324.2 653,310 640,310" fill="#3f3f3f"/>
<circle cx="1006" cy="1327" r="22.5" fill="none" stroke="#555" stroke-width="1"/>
<circle cx="1006" cy="1327" r="20" fill="#3b3b3b"/>
<text x="1006" y="1341" font-size="40" fill="#c9cacc" text-anchor="middle" font-family="Liberation Serif, serif">S</text>
<text x="1043" y="1328.5" font-size="26" fill="#46474a" font-family="DejaVu Sans, sans-serif" font-weight="200" textLength="114" lengthAdjust="spacingAndGlyphs">silhouette</text>
<line x1="538" y1="810" x2="837" y2="1227.5" stroke="#e83c22" stroke-width="9.5"/>
<polygon points="864.5,1265.5 815,1240 854.5,1211" fill="#e83c22"/>
</svg>
<div class="abs" style="left:0;top:205px;width:1600px;height:36px;background:#efefef"></div>
<div class="abs" style="left:42px;top:205px;width:110px;height:36px;background:#f0f0f0"></div>
<div class="abs" style="left:152px;top:205px;width:585px;height:36px;background:#b4b4b4"></div>
<div class="abs" style="left:737px;top:205px;width:144px;height:36px;background:#cfcfcf"></div>
<div class="abs" style="left:42px;top:239.8px;width:1558px;height:1.4px;background:#9e9e9e;opacity:.8"></div>
<svg class="abs" style="left:0;top:205px" width="1600" height="36" viewBox="0 205 1600 36"><line x1="65.5" y1="225.5" x2="65.5" y2="240" stroke="#8a8a8a" stroke-width="1.2"/><line x1="87.0" y1="233" x2="87.0" y2="240" stroke="#8a8a8a" stroke-width="1.2"/><line x1="108.4" y1="227.5" x2="108.4" y2="240" stroke="#8a8a8a" stroke-width="1.2"/><line x1="129.9" y1="233" x2="129.9" y2="240" stroke="#8a8a8a" stroke-width="1.2"/><line x1="151.3" y1="225.5" x2="151.3" y2="240" stroke="#8a8a8a" stroke-width="1.2"/><line x1="172.8" y1="233" x2="172.8" y2="240" stroke="#8a8a8a" stroke-width="1.2"/><line x1="194.2" y1="227.5" x2="194.2" y2="240" stroke="#8a8a8a" stroke-width="1.2"/><line x1="215.7" y1="233" x2="215.7" y2="240" stroke="#8a8a8a" stroke-width="1.2"/><line x1="237.1" y1="225.5" x2="237.1" y2="240" stroke="#8a8a8a" stroke-width="1.2"/><line x1="258.6" y1="233" x2="258.6" y2="240" stroke="#8a8a8a" stroke-width="1.2"/><line x1="280.0" y1="227.5" x2="280.0" y2="240" stroke="#8a8a8a" stroke-width="1.2"/><line x1="301.5" y1="233" x2="301.5" y2="240" stroke="#8a8a8a" stroke-width="1.2"/><line x1="322.9" y1="225.5" x2="322.9" y2="240" stroke="#8a8a8a" stroke-width="1.2"/><line x1="344.4" y1="233" x2="344.4" y2="240" stroke="#8a8a8a" stroke-width="1.2"/><line x1="365.8" y1="227.5" x2="365.8" y2="240" stroke="#8a8a8a" stroke-width="1.2"/><line x1="387.2" y1="233" x2="387.2" y2="240" stroke="#8a8a8a" stroke-width="1.2"/><line x1="408.7" y1="225.5" x2="408.7" y2="240" stroke="#8a8a8a" stroke-width="1.2"/><line x1="430.1" y1="233" x2="430.1" y2="240" stroke="#8a8a8a" stroke-width="1.2"/><line x1="451.6" y1="227.5" x2="451.6" y2="240" stroke="#8a8a8a" stroke-width="1.2"/><line x1="473.1" y1="233" x2="473.1" y2="240" stroke="#8a8a8a" stroke-width="1.2"/><line x1="494.5" y1="225.5" x2="494.5" y2="240" stroke="#8a8a8a" stroke-width="1.2"/><line x1="516.0" y1="233" x2="516.0" y2="240" stroke="#8a8a8a" stroke-width="1.2"/><line x1="537.4" y1="227.5" x2="537.4" y2="240" stroke="#8a8a8a" stroke-width="1.2"/><line x1="558.9" y1="233" x2="558.9" y2="240" stroke="#8a8a8a" stroke-width="1.2"/><line x1="580.3" y1="225.5" x2="580.3" y2="240" stroke="#8a8a8a" stroke-width="1.2"/><line x1="601.8" y1="233" x2="601.8" y2="240" stroke="#8a8a8a" stroke-width="1.2"/><line x1="623.2" y1="227.5" x2="623.2" y2="240" stroke="#8a8a8a" stroke-width="1.2"/><line x1="644.6" y1="233" x2="644.6" y2="240" stroke="#8a8a8a" stroke-width="1.2"/><line x1="666.1" y1="225.5" x2="666.1" y2="240" stroke="#8a8a8a" stroke-width="1.2"/><line x1="687.5" y1="233" x2="687.5" y2="240" stroke="#8a8a8a" stroke-width="1.2"/><line x1="709.0" y1="227.5" x2="709.0" y2="240" stroke="#8a8a8a" stroke-width="1.2"/><line x1="730.5" y1="233" x2="730.5" y2="240" stroke="#8a8a8a" stroke-width="1.2"/><line x1="751.9" y1="225.5" x2="751.9" y2="240" stroke="#8a8a8a" stroke-width="1.2"/><line x1="773.3" y1="233" x2="773.3" y2="240" stroke="#8a8a8a" stroke-width="1.2"/><line x1="794.8" y1="227.5" x2="794.8" y2="240" stroke="#8a8a8a" stroke-width="1.2"/><line x1="816.2" y1="233" x2="816.2" y2="240" stroke="#8a8a8a" stroke-width="1.2"/><line x1="837.7" y1="225.5" x2="837.7" y2="240" stroke="#8a8a8a" stroke-width="1.2"/><line x1="859.2" y1="233" x2="859.2" y2="240" stroke="#8a8a8a" stroke-width="1.2"/><line x1="880.6" y1="227.5" x2="880.6" y2="240" stroke="#8a8a8a" stroke-width="1.2"/><line x1="902.0" y1="233" x2="902.0" y2="240" stroke="#8a8a8a" stroke-width="1.2"/><line x1="923.5" y1="225.5" x2="923.5" y2="240" stroke="#8a8a8a" stroke-width="1.2"/><line x1="945.0" y1="233" x2="945.0" y2="240" stroke="#8a8a8a" stroke-width="1.2"/><line x1="966.4" y1="227.5" x2="966.4" y2="240" stroke="#8a8a8a" stroke-width="1.2"/><line x1="987.8" y1="233" x2="987.8" y2="240" stroke="#8a8a8a" stroke-width="1.2"/><line x1="1009.3" y1="225.5" x2="1009.3" y2="240" stroke="#8a8a8a" stroke-width="1.2"/><line x1="1030.8" y1="233" x2="1030.8" y2="240" stroke="#8a8a8a" stroke-width="1.2"/><line x1="1052.2" y1="227.5" x2="1052.2" y2="240" stroke="#8a8a8a" stroke-width="1.2"/><line x1="1073.7" y1="233" x2="1073.7" y2="240" stroke="#8a8a8a" stroke-width="1.2"/><line x1="1095.1" y1="225.5" x2="1095.1" y2="240" stroke="#8a8a8a" stroke-width="1.2"/><line x1="1116.5" y1="233" x2="1116.5" y2="240" stroke="#8a8a8a" stroke-width="1.2"/><line x1="1138.0" y1="227.5" x2="1138.0" y2="240" stroke="#8a8a8a" stroke-width="1.2"/><line x1="1159.5" y1="233" x2="1159.5" y2="240" stroke="#8a8a8a" stroke-width="1.2"/><line x1="1180.9" y1="225.5" x2="1180.9" y2="240" stroke="#8a8a8a" stroke-width="1.2"/><line x1="1202.3" y1="233" x2="1202.3" y2="240" stroke="#8a8a8a" stroke-width="1.2"/><line x1="1223.8" y1="227.5" x2="1223.8" y2="240" stroke="#8a8a8a" stroke-width="1.2"/><line x1="1245.2" y1="233" x2="1245.2" y2="240" stroke="#8a8a8a" stroke-width="1.2"/><line x1="1266.7" y1="225.5" x2="1266.7" y2="240" stroke="#8a8a8a" stroke-width="1.2"/><line x1="1288.1" y1="233" x2="1288.1" y2="240" stroke="#8a8a8a" stroke-width="1.2"/><line x1="1309.6" y1="227.5" x2="1309.6" y2="240" stroke="#8a8a8a" stroke-width="1.2"/><line x1="1331.0" y1="233" x2="1331.0" y2="240" stroke="#8a8a8a" stroke-width="1.2"/><line x1="1352.5" y1="225.5" x2="1352.5" y2="240" stroke="#8a8a8a" stroke-width="1.2"/><line x1="1373.9" y1="233" x2="1373.9" y2="240" stroke="#8a8a8a" stroke-width="1.2"/><line x1="1395.4" y1="227.5" x2="1395.4" y2="240" stroke="#8a8a8a" stroke-width="1.2"/><line x1="1416.8" y1="233" x2="1416.8" y2="240" stroke="#8a8a8a" stroke-width="1.2"/><line x1="1438.3" y1="225.5" x2="1438.3" y2="240" stroke="#8a8a8a" stroke-width="1.2"/><line x1="1459.8" y1="233" x2="1459.8" y2="240" stroke="#8a8a8a" stroke-width="1.2"/><line x1="1481.2" y1="227.5" x2="1481.2" y2="240" stroke="#8a8a8a" stroke-width="1.2"/><line x1="1502.6" y1="233" x2="1502.6" y2="240" stroke="#8a8a8a" stroke-width="1.2"/><line x1="1524.1" y1="225.5" x2="1524.1" y2="240" stroke="#8a8a8a" stroke-width="1.2"/><line x1="1545.5" y1="233" x2="1545.5" y2="240" stroke="#8a8a8a" stroke-width="1.2"/><line x1="1567.0" y1="227.5" x2="1567.0" y2="240" stroke="#8a8a8a" stroke-width="1.2"/><line x1="1588.4" y1="233" x2="1588.4" y2="240" stroke="#8a8a8a" stroke-width="1.2"/><text transform="translate(234.6 225.4) scale(.8 1)" font-size="19.6" fill="#3a3a3a" text-anchor="middle" font-family="Liberation Sans, sans-serif">1</text><text transform="translate(320.4 225.4) scale(.8 1)" font-size="19.6" fill="#3a3a3a" text-anchor="middle" font-family="Liberation Sans, sans-serif">2</text><text transform="translate(406.2 225.4) scale(.8 1)" font-size="19.6" fill="#3a3a3a" text-anchor="middle" font-family="Liberation Sans, sans-serif">3</text><text transform="translate(492.0 225.4) scale(.8 1)" font-size="19.6" fill="#3a3a3a" text-anchor="middle" font-family="Liberation Sans, sans-serif">4</text><text transform="translate(577.8 225.4) scale(.8 1)" font-size="19.6" fill="#3a3a3a" text-anchor="middle" font-family="Liberation Sans, sans-serif">5</text><text transform="translate(663.6 225.4) scale(.8 1)" font-size="19.6" fill="#3a3a3a" text-anchor="middle" font-family="Liberation Sans, sans-serif">6</text><text transform="translate(749.4 225.4) scale(.8 1)" font-size="19.6" fill="#3a3a3a" text-anchor="middle" font-family="Liberation Sans, sans-serif">7</text><text transform="translate(835.2 225.4) scale(.8 1)" font-size="19.6" fill="#3a3a3a" text-anchor="middle" font-family="Liberation Sans, sans-serif">8</text><text transform="translate(921.0 225.4) scale(.8 1)" font-size="19.6" fill="#3a3a3a" text-anchor="middle" font-family="Liberation Sans, sans-serif">9</text><text transform="translate(1010.1 225.4) scale(.8 1)" font-size="19.6" fill="#3a3a3a" text-anchor="middle" font-family="Liberation Sans, sans-serif" letter-spacing="5">10</text><text transform="translate(1095.9 225.4) scale(.8 1)" font-size="19.6" fill="#3a3a3a" text-anchor="middle" font-family="Liberation Sans, sans-serif" letter-spacing="5">11</text><text transform="translate(1181.7 225.4) scale(.8 1)" font-size="19.6" fill="#3a3a3a" text-anchor="middle" font-family="Liberation Sans, sans-serif" letter-spacing="5">12</text><text transform="translate(1267.5 225.4) scale(.8 1)" font-size="19.6" fill="#3a3a3a" text-anchor="middle" font-family="Liberation Sans, sans-serif" letter-spacing="5">13</text><text transform="translate(1353.3 225.4) scale(.8 1)" font-size="19.6" fill="#3a3a3a" text-anchor="middle" font-family="Liberation Sans, sans-serif" letter-spacing="5">14</text><text transform="translate(1439.1 225.4) scale(.8 1)" font-size="19.6" fill="#3a3a3a" text-anchor="middle" font-family="Liberation Sans, sans-serif" letter-spacing="5">15</text><text transform="translate(1524.9 225.4) scale(.8 1)" font-size="19.6" fill="#3a3a3a" text-anchor="middle" font-family="Liberation Sans, sans-serif" letter-spacing="5">16</text><line x1="737.5" y1="206" x2="737.5" y2="241" stroke="#9a9a9a" stroke-width="1.5"/></svg>
<div class="abs" style="left:60px;top:211px;width:133px;height:26.5px;background:rgba(250,250,250,.8);border:1px solid #dcdcdc"></div>
<div class="t" style="left:53.5px;top:215.5px;font-size:16.6px;color:#9c9c9c;font-family:'DejaVu Sans',sans-serif">-<span style="margin-left:5.5px">21.759 , 0.375</span></div>
<div class="abs" style="left:0;top:205px;width:42px;height:1190px;background:#fff"></div>
<div class="abs" style="left:-20px;top:1330px;width:83px;height:100px;background:#fff;border-radius:35px"></div>
<div class="abs" style="left:0;top:0;width:1600px;height:16px;background:linear-gradient(90deg,#ece8dd 0%,#ebe7db 42%,#dcd5c8 48%,#cdc6ba 52.5%,#ddd2c1 59%,#e8dcc9 65%,#d3cabc 69%,#b6b5b1 73%,#aeaeac 100%)"></div>
<div class="abs" style="left:0;top:14.3px;width:1600px;height:1.7px;background:#3c3a34;opacity:.85"></div>
<div class="t" style="left:98px;top:-19px;font-size:26.5px;font-weight:bold;color:#111">Silhouette Studio</div>
<div class="t" style="left:346px;top:-19px;font-size:26.5px;font-weight:normal;color:#111">File</div>
<div class="t" style="left:419px;top:-19px;font-size:26.5px;font-weight:normal;color:#111">Edit</div>
<div class="t" style="left:499px;top:-19px;font-size:26.5px;font-weight:normal;color:#111">View</div>
<div class="t" style="left:587px;top:-19px;font-size:26.5px;font-weight:normal;color:#111">Panels</div>
<div class="t" style="left:697px;top:-19px;font-size:26.5px;font-weight:normal;color:#111">Object</div>
<div class="t" style="left:807px;top:-19px;font-size:26.5px;font-weight:normal;color:#111">Help</div>
<div class="abs" style="left:40px;top:-14px;width:13px;height:18px;background:#2a2823;border-radius:0 0 6px 8px"></div><div class="abs" style="left:50px;top:-14px;width:13px;height:18px;background:#2a2823;border-radius:0 0 8px 6px"></div>
<div class="abs" style="left:1538px;top:-8px;width:24px;height:14px;background:#111;border-radius:0 0 10px 12px"></div><div class="abs" style="left:1552px;top:0;width:0;height:0;border-left:9px solid transparent;border-top:10px solid #111"></div>
<div class="abs" style="left:1586px;top:0;width:14px;height:11px;background:#8fd068"></div>
<div class="abs" style="left:0;top:16px;width:1600px;height:40px;background:#f6f6f6;border-top-left-radius:7px"></div>
<div class="abs" style="left:12.5px;top:25.5px;width:21px;height:21px;border-radius:50%;background:#dddddd;border:1px solid #d2d2d2"></div>
<div class="abs" style="left:48.5px;top:25.5px;width:21px;height:21px;border-radius:50%;background:#dddddd;border:1px solid #d2d2d2"></div>
<div class="abs" style="left:84.5px;top:25.5px;width:21px;height:21px;border-radius:50%;background:#dddddd;border:1px solid #d2d2d2"></div>
<div class="t" style="left:1041px;top:25.5px;font-size:24px;letter-spacing:.36px;color:#adadad">Silhouette Studio<span style="font-size:14px;position:relative;top:-7px">®</span> Business Edition: Untitled-2</div>
<div class="abs" style="left:0;top:55.5px;width:1600px;height:54.5px;background:#5a5c5b"></div>
<div class="abs" style="left:180px;top:57px;width:2px;height:42px;background:#8e908f"></div>
<div class="abs" style="left:328px;top:57px;width:2px;height:42px;background:#8e908f"></div>
<div class="abs" style="left:476px;top:57px;width:2px;height:42px;background:#8e908f"></div>
<div class="abs" style="left:624px;top:57px;width:2px;height:42px;background:#8e908f"></div>
<div class="abs" style="left:901.5px;top:57px;width:2px;height:42px;background:#8e908f"></div>
<div class="abs" style="left:0;top:110px;width:1600px;height:55px;background:#fff"></div>
<div class="abs" style="left:521px;top:110px;width:2px;height:55px;background:#555"></div>
<div class="abs" style="left:710px;top:110px;width:2px;height:55px;background:#555"></div>
<div class="abs" style="left:842px;top:110px;width:2px;height:55px;background:#555"></div>
<div class="abs" style="left:1090px;top:110px;width:2px;height:55px;background:#555"></div>
<div class="abs" style="left:1221px;top:110px;width:2px;height:55px;background:#555"></div>
<div class="abs" style="left:0;top:164px;width:1600px;height:42px;background:#484a49"></div>
<div class="abs" style="left:0;top:164px;width:42px;height:43px;background:#5bc3df"></div>
<div class="abs" style="left:42px;top:165.3px;width:163px;height:38.8px;background:#dcdcdc;border:1px solid #6c6c6c"></div>
<div class="abs" style="left:205px;top:165.3px;width:164px;height:38.8px;background:#fff;border:1px solid #6c6c6c"></div>
<div class="abs" style="left:369px;top:165.3px;width:39.6px;height:38.8px;background:#dcdcdc;border:1px solid #6c6c6c"></div>
<div class="t" style="left:52px;top:173px;font-size:24px;color:#3c3c3c">Untitled-1</div>
<div class="t" style="left:215px;top:173px;font-size:24px;color:#3c3c3c">Untitled-2</div>
<div class="t" style="left:182px;top:173px;font-size:22px;color:#555">×</div>
<div class="t" style="left:344px;top:173px;font-size:22px;color:#555">×</div>
<div class="t" style="left:381px;top:172px;font-size:23px;color:#555">+</div>
<svg class="abs" style="left:0;top:55px" width="1600" height="56" viewBox="0 55 1600 56"><path d="M11 66 H22 L29 73 V89 H11 Z" fill="#e9e9e9"/><path d="M22 66 V73 H29 Z" fill="#bdbdbd"/><path d="M48 66 H58 L61 69 H73 V73 H55 L48 88 Z" fill="#e9e9e9"/><path d="M56 74.5 H78 L70.5 89 H49 Z" fill="#e9e9e9"/><path d="M95 66 H115 L117.5 68.5 V89 H95 Z" fill="#e9e9e9"/><rect x="99" y="66" width="12" height="8" fill="#5a5c5b"/><rect x="106" y="67" width="3" height="6" fill="#e9e9e9"/><rect x="98.5" y="78" width="15.5" height="8.5" fill="#5a5c5b"/><rect x="142" y="66.5" width="16" height="5" fill="#e9e9e9"/><rect x="136" y="72.5" width="28" height="12" rx="2" fill="#e9e9e9"/><rect x="141" y="79" width="18" height="10.5" fill="#e9e9e9" stroke="#5a5c5b" stroke-width="1.5"/><rect x="143" y="68" width="14" height="1.5" fill="#9fd3df"/><path d="M203 64 L216 84 M219 64 L206 84" stroke="#e9e9e9" stroke-width="3.2" fill="none"/><circle cx="204.5" cy="87.5" r="3.6" fill="none" stroke="#e9e9e9" stroke-width="1.8"/><circle cx="217.5" cy="87.5" r="3.6" fill="none" stroke="#e9e9e9" stroke-width="1.8"/><path d="M251 63.5 H265.5 V88 H259 V70 H251 Z" fill="#e9e9e9"/><path d="M243.5 67.5 H252 L259 74.5 V91.5 H243.5 Z" fill="#e9e9e9"/><path d="M252 67.5 V74.5 H259" fill="none" stroke="#5a5c5b" stroke-width="1.3"/><rect x="287" y="66" width="22" height="25.5" fill="#e9e9e9"/><rect x="293" y="63" width="10" height="5.5" rx="1.5" fill="#e9e9e9" stroke="#5a5c5b" stroke-width="1"/><rect x="290.5" y="73" width="15" height="2" fill="#5a5c5b"/><rect x="290.5" y="77.5" width="15" height="2" fill="#5a5c5b"/><rect x="290.5" y="82" width="15" height="2" fill="#5a5c5b"/><rect x="290.5" y="86.5" width="15" height="2" fill="#5a5c5b"/><path d="M344 84.5 L350 70 L354.5 75.5 C362 71 370 73 374.5 80 C368 77 362 78 358.5 81 L362 85.5 Z" fill="#e9e9e9"/><path d="M417.5 84.5 L411.5 70 L407 75.5 C399.5 71 391.500 73 387 80 C393.500 77 399.500 78 403 81 L399.500 85.5 Z" fill="#a9abaa"/><circle cx="445" cy="78" r="12" fill="none" stroke="#e9e9e9" stroke-width="5" stroke-dasharray="18.5 6.6" transform="rotate(-70 445 78)"/><polygon points="452,62.5 460,70 450,72" fill="#e9e9e9"/><polygon points="456,88 447,93 448,83" fill="#e9e9e9"/><polygon points="431,80 433,69 440,76" fill="#e9e9e9"/><rect x="493.5" y="64" width="27" height="27" fill="none" stroke="#e9e9e9" stroke-width="2" stroke-dasharray="4.6 2.8"/><rect x="537" y="64" width="27" height="27" fill="none" stroke="#e9e9e9" stroke-width="2" stroke-dasharray="4.6 2.8"/><rect x="580.5" y="64" width="27" height="27" fill="none" stroke="#e9e9e9" stroke-width="2" stroke-dasharray="4.6 2.8"/><rect x="503" y="67.5" width="14" height="14" fill="none" stroke="#e9e9e9" stroke-width="2"/><rect x="497" y="73" width="14.5" height="14.5" fill="#e9e9e9" stroke="#5a5c5b" stroke-width="1"/><path d="M543 70.5 L557 85 M557 70.5 L543 85" stroke="#e9e9e9" stroke-width="2.4"/><path d="M586 79 C585 71 592 67.500 598 69 C604 70.500 606 77 602 81 C599 83.500 598 81 596 83 C597.500 87 591 88 588 85 C586.500 83.500 586 81 586 79 Z" fill="#e9e9e9"/><circle cx="591" cy="74.500" r="1.5" fill="#5a5c5b"/><circle cx="596.5" cy="72.5" r="1.5" fill="#5a5c5b"/><circle cx="601" cy="76" r="1.5" fill="#5a5c5b"/><circle cx="590" cy="80" r="1.5" fill="#5a5c5b"/><circle cx="653" cy="76" r="10.8" fill="none" stroke="#e9e9e9" stroke-width="3"/><path d="M660.5 84 L668 91" stroke="#e9e9e9" stroke-width="3.6" stroke-linecap="round"/><path d="M648 76 H658" stroke="#e9e9e9" stroke-width="3"/><path d="M653 71 V81" stroke="#e9e9e9" stroke-width="3"/><circle cx="696.5" cy="76" r="10.8" fill="none" stroke="#e9e9e9" stroke-width="3"/><path d="M704.0 84 L711.5 91" stroke="#e9e9e9" stroke-width="3.6" stroke-linecap="round"/><path d="M691.5 76 H701.5" stroke="#e9e9e9" stroke-width="3"/><path d="M728 66 H744 A4 4 0 0 1 748 70 V76 A10 10 0 0 0 738 86.500 V88 H732 A4 4 0 0 1 728 84 Z" fill="#e9e9e9"/><path d="M737.500 64 V76 H727" stroke="#5a5c5b" stroke-width="2" fill="none"/><circle cx="744" cy="82.500" r="6.2" fill="#5a5c5b" stroke="#e9e9e9" stroke-width="1.8"/><path d="M741 82.500 H747 M744 79.500 V85.500" stroke="#e9e9e9" stroke-width="1.6"/><path d="M748.5 87.500 L753 91" stroke="#e9e9e9" stroke-width="2.4"/><path d="M777 63 H792 V66 H777 Z" fill="#e9e9e9"/><path d="M778 68 H791 V75 H802 L784.500 91.500 L767.500 75 H778 Z" fill="#e9e9e9"/><path d="M822 91.500 L819 84 L815.500 78.500 L817.500 77.500 L821.500 81 L820.500 66.500 L823.500 66 L825 76 L826 64 L829 64 L829.500 76 L832 65 L835 65.500 L833.500 77.500 L837.500 70 L840 71 L836.500 83 L834.500 91.500 Z" fill="#e9e9e9"/><rect x="856.5" y="67.500" width="29" height="20.500" fill="none" stroke="#e9e9e9" stroke-width="2.2"/><path d="M864 78 H878 M871 71.500 V84.500" stroke="#e9e9e9" stroke-width="2.2"/></svg>
<svg class="abs" style="left:0;top:110px" width="1600" height="55" viewBox="0 110 1600 55"><defs><pattern id="xh" width="9.6" height="9.6" patternUnits="userSpaceOnUse" patternTransform="translate(8 119.5)"><path d="M0 0 L9.6 9.6 M9.6 0 L0 9.6" stroke="#c4c4c4" stroke-width="1.1"/></pattern></defs><rect x="8" y="119.5" width="51" height="38" fill="url(#xh)"/><polygon points="68.7,132 80.3,132 74.5,141.500" fill="#787878"/><polygon points="158.2,132 169.8,132 164,141.500" fill="#787878"/><polygon points="342.7,132 354.3,132 348.5,141.500" fill="#787878"/><rect x="109" y="129" width="30.500" height="18.500" fill="none" stroke="#e5372c" stroke-width="1.6"/><rect x="200" y="137" width="126" height="3" fill="#787878"/><rect x="384.500" y="124.500" width="71.500" height="27" fill="#f0f0f0"/><text x="390.500" y="149.500" font-size="21.600" fill="#505050" font-family="DejaVu Sans, sans-serif">0.00</text><text x="474" y="144.500" font-size="22.500" fill="#505050" font-family="DejaVu Sans, sans-serif">pt</text><path d="M546 151.500 L572.500 126" stroke="#787878" stroke-width="2"/><path d="M565.500 125.500 H573.500 V133.500" fill="none" stroke="#787878" stroke-width="2"/><rect x="544.500" y="148.500" width="4.500" height="4.500" fill="#787878"/><path d="M605 139 H629 M617 126.500 V151.500" stroke="#787878" stroke-width="2.2"/><polygon points="617,123.500 621,128.500 613,128.500" fill="#787878"/><polygon points="617,154 621,149 613,149" fill="#787878"/><polygon points="602.500,139 607.500,135 607.500,143" fill="#787878"/><polygon points="631.500,139 626.500,135 626.500,143" fill="#787878"/><path d="M656.500 139 H693" stroke="#aaa" stroke-width="1.4"/><rect x="660" y="128.500" width="7" height="20.500" fill="#787878"/><rect x="671" y="132" width="7" height="14" fill="#787878"/><rect x="682" y="125" width="7" height="28" fill="#787878"/><polygon points="587.5,154 587.5,164 578.0,164" fill="#6a6a6a"/><polygon points="645.5,154 645.5,164 636.0,164" fill="#6a6a6a"/><polygon points="703,154 703,164 693.5,164" fill="#6a6a6a"/><rect x="736" y="134" width="17.500" height="17.500" fill="none" stroke="#cfcfcf" stroke-width="2"/><path d="M742 127 H760 V146" fill="none" stroke="#cfcfcf" stroke-width="1.8"/><rect x="733.5" y="124.5" width="5" height="5" fill="#cfcfcf"/><rect x="757.5" y="124.5" width="5" height="5" fill="#cfcfcf"/><rect x="733.5" y="149" width="5" height="5" fill="#cfcfcf"/><rect x="757.5" y="149" width="5" height="5" fill="#cfcfcf"/><rect x="751" y="149" width="5" height="5" fill="#cfcfcf"/><rect x="794" y="134" width="17.500" height="17.500" fill="none" stroke="#cfcfcf" stroke-width="2"/><path d="M803 127 H818.500 V143" fill="none" stroke="#cfcfcf" stroke-width="1.8"/><rect x="791.5" y="131.5" width="5" height="5" fill="#cfcfcf"/><rect x="809" y="131.5" width="5" height="5" fill="#cfcfcf"/><rect x="791.5" y="149" width="5" height="5" fill="#cfcfcf"/><rect x="809" y="149" width="5" height="5" fill="#cfcfcf"/><rect x="800.5" y="124.5" width="5" height="5" fill="#cfcfcf"/><rect x="816" y="124.5" width="5" height="5" fill="#cfcfcf"/><rect x="816" y="141" width="5" height="5" fill="#cfcfcf"/><rect x="863" y="122.500" width="19" height="19" fill="none" stroke="#787878" stroke-width="2.6"/><rect x="879" y="137" width="19" height="19" fill="none" stroke="#787878" stroke-width="2.6"/><rect x="870" y="129" width="21.500" height="21.500" fill="#fff" stroke="#787878" stroke-width="4"/><rect x="921" y="123" width="14" height="14" fill="#c4c4c4" stroke="#787878" stroke-width="2.600"/><rect x="940.500" y="141" width="14" height="14" fill="#c4c4c4" stroke="#787878" stroke-width="2.600"/><path d="M943 131.500 H950.500 V137 M933 142 V147.500 H939" fill="none" stroke="#787878" stroke-width="3"/><rect x="979" y="123" width="19" height="19" fill="none" stroke="#787878" stroke-width="3"/><rect x="989" y="133" width="23" height="22" fill="#fff" stroke="#787878" stroke-width="4.500"/><rect x="1048" y="133.500" width="22" height="21" fill="none" stroke="#787878" stroke-width="3.500"/><rect x="1036.500" y="123" width="20" height="20" fill="#c4c4c4" stroke="#787878" stroke-width="3"/><rect x="1108" y="137" width="31" height="20" fill="#787878"/><circle cx="1139.500" cy="134.500" r="11" fill="#787878"/><polygon points="1185.3,122.8 1190.4,132.8 1201.5,134.5 1193.5,142.5 1195.3,153.6 1185.3,148.4 1175.3,153.6 1177.1,142.5 1169.1,134.5 1180.2,132.8" fill="#787878" stroke="#787878" stroke-width="9" stroke-linejoin="round"/><polygon points="1185.3,122.8 1190.4,132.8 1201.5,134.5 1193.5,142.5 1195.3,153.6 1185.3,148.4 1175.3,153.6 1177.1,142.5 1169.1,134.5 1180.2,132.8" fill="#787878" stroke="#fff" stroke-width="5.500" stroke-linejoin="round"/><polygon points="1185.3,122.8 1190.4,132.8 1201.5,134.5 1193.5,142.5 1195.3,153.6 1185.3,148.4 1175.3,153.6 1177.1,142.5 1169.1,134.5 1180.2,132.8" fill="#787878" stroke="#787878" stroke-width="1.500" stroke-linejoin="round"/><path d="M1249 116 L1261.0 124.1 V137.9 L1249 146 L1237.0 137.9 V124.1 Z M1237.0 124.1 L1249 132.2 L1261.0 124.1 M1249 132.2 V146" fill="#fff" stroke="#8a8a8a" stroke-width="1.800" stroke-linejoin="round"/><path d="M1269 127 L1282.0 135.505 V149.995 L1269 158.5 L1256.0 149.995 V135.505 Z M1256.0 135.505 L1269 144.01 L1282.0 135.505 M1269 144.01 V158.5" fill="#fff" stroke="#8a8a8a" stroke-width="1.800" stroke-linejoin="round"/><path d="M1302.500 124 L1331.500 153 M1331.500 124 L1302.500 153" stroke="#787878" stroke-width="3.800"/></svg>
<svg class="abs" style="left:0;top:160px" width="70" height="1231" viewBox="0 160 70 1231"><path d="M9.500 172.500 L9.500 196 L15.500 191 L20 200.500 L24.500 198.500 L20 189.500 L29.500 189 Z" fill="#fff"/><ellipse cx="21.500" cy="223" rx="14.500" ry="6.800" fill="none" stroke="#7c7c7c" stroke-width="2.600" stroke-dasharray="3.600 1.900" transform="rotate(-13 21.500 223)"/><path d="M7.500 228.500 C4.500 233.500 10 237 14.500 233 C18.500 229.500 22.500 235 20 241.500 M9 229.500 C12 226.500 17 228 18.500 231" fill="none" stroke="#7c7c7c" stroke-width="2.500"/><rect x="10" y="262.500" width="7" height="7" fill="#7c7c7c"/><path d="M17 266 C27 267 33 263 36 258" fill="none" stroke="#7c7c7c" stroke-width="1.500"/><path d="M13.500 269 C13.500 279 10 284 4 285.500" fill="none" stroke="#7c7c7c" stroke-width="1.500"/><path d="M6.500 328 L33 302" stroke="#8a8a8a" stroke-width="1.500"/><polygon points="41,327 41,332.500 36,332.500" fill="#7c7c7c"/><rect x="-0.800" y="335.400" width="52.300" height="49.200" fill="none" stroke="#e83c22" stroke-width="9.600"/><rect x="6.300" y="348.700" width="28.400" height="20" fill="#fff" stroke="#8a8a8a" stroke-width="1.600"/><polygon points="41,371 41,380 33,380" fill="#7c7c7c"/><path d="M13 390 C25 391 34 401 36 415.500 L4.500 415.500 Z" fill="#fff" stroke="#8a8a8a" stroke-width="1.500" stroke-linejoin="round"/><polygon points="41,414.500 41,423.500 33,423.500" fill="#7c7c7c"/><path d="M12 450.500 L29 433.500 a3.500 3.500 0 0 1 5 5 L17 455.500 Z" fill="#7c7c7c"/><path d="M10.500 452 L15.500 457 L6 459.500 Z" fill="#fff" stroke="#7c7c7c" stroke-width="1.200"/><polygon points="41,457 41,466.500 31.500,466.500" fill="#7c7c7c"/><text x="20" y="502.500" font-size="42" text-anchor="middle" fill="#7c7c7c" font-family="Liberation Serif, serif">A</text><path d="M12 520 H33 L29.500 541 H8.500 Z" fill="#fff" stroke="#9a9a9a" stroke-width="1.400"/><path d="M6 538 H26 V544 H6 Z" fill="#fff" stroke="#9a9a9a" stroke-width="1.400"/><path d="M20 531 L31.500 519" stroke="#7c7c7c" stroke-width="4"/><path d="M12 524.500 H22" stroke="#bbb" stroke-width="1.200"/><path d="M6 578 L20 565 C24 562 32 562 35.500 566 C37 569 36 572 33 575 L22 585 C18 588 10 588 6 585 C4 583 4 580 6 578 Z" fill="#fff" stroke="#7c7c7c" stroke-width="1.500"/><path d="M14.500 570.500 L20 565 C24 562 32 562 35.500 566 C37 569 36 572 33 575 L28.500 579 C25 574 19 571 14.500 570.500 Z" fill="#7c7c7c"/><path d="M9 583 L18 574.500" stroke="#7c7c7c" stroke-width="1.200"/><path d="M8 634 L19 617" stroke="#7c7c7c" stroke-width="2.400"/><path d="M19 618 L29 602.500" stroke="#7c7c7c" stroke-width="5.400" stroke-linecap="round"/><path d="M22.500 656 L9 669.500 C6 672.500 6 675 8 676.500 C10 677.500 12 676.500 14.500 674 L27.500 661" fill="#fff" stroke="#7c7c7c" stroke-width="1.500"/><path d="M20 654 L29.500 663.500" stroke="#7c7c7c" stroke-width="3.600" stroke-linecap="round"/><path d="M25 658.500 L31 651" stroke="#7c7c7c" stroke-width="6.500" stroke-linecap="round"/><path d="M4 1360 H17.500 L18.500 1363.500 H36 V1389 H4 Z" fill="#7f8080"/><path d="M17.500 1369.500 H22.500 V1376.500 H27 L20 1384 L13 1376.500 H17.500 Z" fill="#fff"/><polygon points="45,1362 54,1370 45,1378" fill="#6a6a6a"/></svg>
<div class="abs" style="left:1010px;top:308px;width:523px;height:577px;background:#fff;border:1.5px solid #8e8e8e"></div>
<div class="abs" style="left:1010px;top:308px;width:523px;height:32.5px;background:#8b8b8b"></div>
<div class="t" style="left:1236px;top:312.5px;font-size:23.6px;color:#ececec;transform:scaleX(.9);transform-origin:0 0">FILL</div>
<svg class="abs" style="left:1010px;top:308px" width="523" height="33" viewBox="0 0 523 33"><polyline points="6,19 15,10 24,19" fill="none" stroke="#e6e6e6" stroke-width="2.6"/><path d="M502 9 L514 21 M514 9 L502 21" stroke="#e6e6e6" stroke-width="2"/></svg>
<div class="abs" style="left:1014px;top:345px;width:50px;height:50px;background:#7d7f7e"></div>
<div class="abs" style="left:1071.5px;top:345px;width:52px;height:50px;background:linear-gradient(90deg,#7f7f7f,#bdbdbd 45%,#ffffff 92%)"></div>
<svg class="abs" style="left:1126px;top:341px" width="57" height="58" viewBox="0 0 57 58"><defs><clipPath id="pk"><rect x="3.5" y="3.5" width="50" height="51"/></clipPath></defs><rect width="57" height="58" fill="#5bc3df"/><rect x="3" y="3" width="51" height="52" fill="#82d3e8"/><g clip-path="url(#pk)"><circle cx="10" cy="13" r="4.6" fill="#fff"/><circle cx="28" cy="13" r="4.6" fill="#fff"/><circle cx="46" cy="13" r="4.6" fill="#fff"/><circle cx="1" cy="28.5" r="4.6" fill="#fff"/><circle cx="19" cy="28.5" r="4.6" fill="#fff"/><circle cx="37" cy="28.5" r="4.6" fill="#fff"/><circle cx="55" cy="28.5" r="4.6" fill="#fff"/><circle cx="10" cy="44" r="4.6" fill="#fff"/><circle cx="28" cy="44" r="4.6" fill="#fff"/><circle cx="46" cy="44" r="4.6" fill="#fff"/></g></svg>
<div class="abs" style="left:1012px;top:399.5px;width:520px;height:28px;background:#e5e5e5"></div>
<div class="t" style="left:1025px;top:404px;font-size:19px;color:#3a3a3a;letter-spacing:.1px">Fill Pattern</div>
<svg class="abs" style="left:1012px;top:440px" width="520" height="331" viewBox="1012 440 520 331" shape-rendering="crispEdges"><defs>
<clipPath id="sw"><rect x="1030" y="449.5" width="440" height="320.7"/></clipPath>
<pattern id="pLace" width="8" height="8" patternUnits="userSpaceOnUse"><rect width="8" height="8" fill="#f5aaa0"/><circle cx="4" cy="4" r="2.6" fill="#fdebe6"/><circle cx="0" cy="0" r="2" fill="#fdebe6"/><circle cx="8" cy="0" r="2" fill="#fdebe6"/><circle cx="0" cy="8" r="2" fill="#fdebe6"/><circle cx="8" cy="8" r="2" fill="#fdebe6"/><circle cx="4" cy="4" r="1" fill="#f7bab1"/></pattern>
<pattern id="pLime" width="6.6" height="6.6" patternUnits="userSpaceOnUse"><rect width="6.6" height="6.6" fill="#fcfdf6"/><circle cx="1.6" cy="1.6" r="1.5" fill="#eff3d6"/><circle cx="4.9" cy="4.9" r="1.5" fill="#eff3d6"/></pattern>
<pattern id="pGing" width="6.6" height="6.6" patternUnits="userSpaceOnUse"><rect width="6.6" height="6.6" fill="#fffafc"/><rect x="0.6" width="2.5" height="6.6" fill="#f9c0d8"/><rect y="4.8" width="6.6" height="1.8" fill="#fff" opacity=".45"/></pattern>
<pattern id="pChev" width="14" height="9.8" patternUnits="userSpaceOnUse"><rect width="14" height="9.8" fill="#fbfaf8"/><polyline points="-1,8 3.5,2.5 7,8 10.5,2.5 15,8" fill="none" stroke="#4d4840" stroke-width="3.1"/></pattern>
<pattern id="pGold" width="14.9" height="19.5" patternUnits="userSpaceOnUse" patternTransform="translate(1208.5 591.9)"><rect width="14.9" height="19.5" fill="#f5f4f2"/><path d="M-2.10 0h4.8M0.3 -2.40v4.8" stroke="#bfa26c" stroke-width="1.8"/><path d="M12.80 0h4.8M15.2 -2.40v4.8" stroke="#bfa26c" stroke-width="1.8"/><path d="M-2.10 19.5h4.8M0.3 17.10v4.8" stroke="#bfa26c" stroke-width="1.8"/><path d="M12.80 19.5h4.8M15.2 17.10v4.8" stroke="#bfa26c" stroke-width="1.8"/><path d="M5.35 9.75h4.8M7.75 7.35v4.8" stroke="#bfa26c" stroke-width="1.8"/></pattern>
<pattern id="pGreen" width="7.2" height="7.2" patternUnits="userSpaceOnUse"><rect width="7.2" height="7.2" fill="#5d8b6a"/><circle cx="1.8" cy="1.8" r="1.45" fill="#cfe0d0"/><circle cx="5.4" cy="5.4" r="1.45" fill="#cfe0d0"/></pattern>
<pattern id="pStripe" width="80" height="6.4" patternUnits="userSpaceOnUse" patternTransform="translate(0 678.3)"><rect width="80" height="6.4" fill="#f8e5d9"/><rect y="0.4" width="80" height="2.1" fill="#b4b9bc"/><rect y="3.9" width="80" height="1.1" fill="#f3d3c7"/></pattern>
<pattern id="pDiag" width="17.4" height="17.4" patternUnits="userSpaceOnUse" patternTransform="rotate(38)"><rect width="17.4" height="17.4" fill="#f8f6f1"/><rect width="17.4" height="9.6" fill="#464452"/></pattern>
<linearGradient id="gSel" x1="0" y1="0" x2="0" y2="1"><stop offset="0" stop-color="#f6a9ab"/><stop offset=".25" stop-color="#f7b3ad"/><stop offset=".5" stop-color="#f9c6ae"/><stop offset=".66" stop-color="#f9c09a"/><stop offset=".82" stop-color="#f7b0aa"/><stop offset="1" stop-color="#f6a5aa"/></linearGradient>
<filter id="bl" x="-50%" y="-50%" width="200%" height="200%"><feGaussianBlur stdDeviation="3"/></filter><radialGradient id="gSel2" cx=".5" cy=".5" r=".6"><stop offset="0" stop-color="#fff" stop-opacity="0"/><stop offset="1" stop-color="#fff" stop-opacity=".45"/></radialGradient>
</defs><rect x="1035.3" y="449" width="79.5" height="48.6" fill="#f3dc86"/><rect x="1121.9" y="449" width="79.5" height="48.6" fill="#f6ded9"/><rect x="1208.5" y="449" width="79.5" height="48.6" fill="#d9d384"/><rect x="1295.1" y="449" width="79.5" height="48.6" fill="#544c41"/><rect x="1381.7" y="449" width="79.5" height="48.6" fill="#f3c6bd"/><rect x="1035.3" y="505.2" width="79.5" height="79.3" fill="#ea7791"/><rect x="1121.9" y="505.2" width="79.5" height="79.3" fill="#ef9d87"/><rect x="1208.5" y="505.2" width="79.5" height="79.3" fill="url(#pLace)"/><rect x="1295.1" y="505.2" width="79.5" height="79.3" fill="#eee"/><rect x="1381.7" y="505.2" width="79.5" height="79.3" fill="url(#pLime)"/><rect x="1035.3" y="591.9" width="79.5" height="79" fill="url(#pGing)"/><rect x="1121.9" y="591.9" width="79.5" height="79" fill="url(#pChev)"/><rect x="1208.5" y="591.9" width="79.5" height="79" fill="url(#pGold)"/><rect x="1295.1" y="591.9" width="79.5" height="79" fill="#ffffff"/><rect x="1381.7" y="591.9" width="79.5" height="79" fill="#eef0f3"/><rect x="1035.3" y="678.3" width="79.5" height="79.2" fill="#efe4b3"/><rect x="1121.9" y="678.3" width="79.5" height="79.2" fill="url(#pStripe)"/><rect x="1208.5" y="678.3" width="79.5" height="79.2" fill="url(#pGreen)"/><rect x="1295.1" y="678.3" width="79.5" height="79.2" fill="url(#pDiag)"/><rect x="1381.7" y="678.3" width="79.5" height="79.2" fill="#f3c8c4"/><rect x="1035.3" y="764.9" width="79.5" height="6" fill="#eedd93"/><rect x="1121.9" y="764.9" width="79.5" height="6" fill="#ec9c98"/><rect x="1208.5" y="764.9" width="79.5" height="6" fill="#f0f0ee"/><rect x="1295.1" y="764.9" width="79.5" height="6" fill="#5f8a6b"/><rect x="1381.7" y="764.9" width="79.5" height="6" fill="#2f2e3c"/><circle cx="1309.1" cy="601.9" r="7" fill="#e25fae" opacity=".8" shape-rendering="auto" clip-path="url(#sw)"/><circle cx="1347.1" cy="609.9" r="10" fill="#e86aa8" opacity=".8" shape-rendering="auto" clip-path="url(#sw)"/><circle cx="1369.1" cy="599.9" r="6" fill="#df62b0" opacity=".8" shape-rendering="auto" clip-path="url(#sw)"/><circle cx="1325.1" cy="629.9" r="11" fill="#f08080" opacity=".8" shape-rendering="auto" clip-path="url(#sw)"/><circle cx="1357.1" cy="633.9" r="8" fill="#ee8a86" opacity=".8" shape-rendering="auto" clip-path="url(#sw)"/><circle cx="1303.1" cy="635.9" r="5" fill="#f4b6cf" opacity=".8" shape-rendering="auto" clip-path="url(#sw)"/><circle cx="1317.1" cy="653.9" r="8" fill="#e765b2" opacity=".8" shape-rendering="auto" clip-path="url(#sw)"/><circle cx="1350.1" cy="657.9" r="10" fill="#e45bb0" opacity=".8" shape-rendering="auto" clip-path="url(#sw)"/><circle cx="1371.1" cy="651.9" r="5" fill="#f08a8a" opacity=".8" shape-rendering="auto" clip-path="url(#sw)"/><circle cx="1335.1" cy="599.9" r="4" fill="#9ec27d" opacity=".8" shape-rendering="auto" clip-path="url(#sw)"/><circle cx="1339.1" cy="645.9" r="5" fill="#a7c98a" opacity=".8" shape-rendering="auto" clip-path="url(#sw)"/><circle cx="1365.1" cy="621.9" r="4" fill="#a0c47f" opacity=".8" shape-rendering="auto" clip-path="url(#sw)"/><circle cx="1305.1" cy="617.9" r="4" fill="#a6c888" opacity=".8" shape-rendering="auto" clip-path="url(#sw)"/><circle cx="1309.1" cy="601.9" r="2.0" fill="#5a5a3a" opacity=".8" shape-rendering="auto"/><circle cx="1347.1" cy="609.9" r="2.8" fill="#5a5a3a" opacity=".8" shape-rendering="auto"/><circle cx="1369.1" cy="599.9" r="1.7" fill="#5a5a3a" opacity=".8" shape-rendering="auto"/><circle cx="1325.1" cy="629.9" r="3.1" fill="#5a5a3a" opacity=".8" shape-rendering="auto"/><circle cx="1357.1" cy="633.9" r="2.2" fill="#5a5a3a" opacity=".8" shape-rendering="auto"/><circle cx="1303.1" cy="635.9" r="1.4" fill="#5a5a3a" opacity=".8" shape-rendering="auto"/><circle cx="1317.1" cy="653.9" r="2.2" fill="#5a5a3a" opacity=".8" shape-rendering="auto"/><circle cx="1350.1" cy="657.9" r="2.8" fill="#5a5a3a" opacity=".8" shape-rendering="auto"/><circle cx="1371.1" cy="651.9" r="1.4" fill="#5a5a3a" opacity=".8" shape-rendering="auto"/><circle cx="1393.7" cy="603.9" r="9" fill="#a9b6d6" opacity=".85" shape-rendering="auto"/><circle cx="1421.7" cy="601.9" r="10" fill="#b4c0dc" opacity=".85" shape-rendering="auto"/><circle cx="1449.7" cy="605.9" r="9" fill="#a3b1d2" opacity=".85" shape-rendering="auto"/><circle cx="1405.7" cy="627.9" r="10" fill="#b0bbd8" opacity=".85" shape-rendering="auto"/><circle cx="1437.7" cy="631.9" r="11" fill="#a8b4d4" opacity=".85" shape-rendering="auto"/><circle cx="1391.7" cy="651.9" r="9" fill="#b2bedb" opacity=".85" shape-rendering="auto"/><circle cx="1421.7" cy="657.9" r="10" fill="#a6b3d3" opacity=".85" shape-rendering="auto"/><circle cx="1451.7" cy="655.9" r="9" fill="#b0bcd9" opacity=".85" shape-rendering="auto"/><circle cx="1407.7" cy="611.9" r="4" fill="#9db58a" opacity=".85" shape-rendering="auto"/><circle cx="1435.7" cy="615.9" r="4" fill="#a5bd90" opacity=".85" shape-rendering="auto"/><circle cx="1421.7" cy="641.9" r="4" fill="#9cb689" opacity=".85" shape-rendering="auto"/><circle cx="1453.7" cy="633.9" r="4" fill="#a3bb8e" opacity=".85" shape-rendering="auto"/><circle cx="1389.7" cy="631.9" r="4" fill="#f2c4cf" opacity=".85" shape-rendering="auto"/><circle cx="1439.7" cy="649.9" r="4" fill="#f4c9d3" opacity=".85" shape-rendering="auto"/><circle cx="1407.7" cy="645.9" r="4" fill="#a0b88c" opacity=".85" shape-rendering="auto"/><circle cx="1457.7" cy="621.9" r="3" fill="#f2c4cf" opacity=".85" shape-rendering="auto"/><rect x="1300" y="503.8" width="75.2" height="74.4" fill="#e3e4e4"/><rect x="1300" y="509" width="71" height="69.2" fill="url(#gSel)" shape-rendering="auto"/><ellipse cx="1353" cy="551" rx="19" ry="9" fill="#f9ad6a" opacity=".75" filter="url(#bl)" shape-rendering="auto"/><ellipse cx="1314" cy="524" rx="13" ry="7" fill="#f9cdd6" opacity=".8" filter="url(#bl)" shape-rendering="auto"/><ellipse cx="1358" cy="567" rx="12" ry="6" fill="#f9cdd6" opacity=".7" filter="url(#bl)" shape-rendering="auto"/><rect x="1295.2" y="498.7" width="84.7" height="83.7" fill="none" stroke="#e83c22" stroke-width="9.8"/><rect x="1504.7" y="449.7" width="17.5" height="320.5" fill="#b2b2b2"/><rect x="1504.7" y="449.7" width="1.5" height="320.5" fill="#8d8d8d"/><rect x="1520.7" y="449.7" width="1.5" height="320.5" fill="#8d8d8d"/><rect x="1504.7" y="699" width="17.5" height="16.5" fill="#5c5c5c"/><rect x="1504.7" y="733.5" width="17.5" height="36.7" fill="#606060"/><polygon points="1513.5,738 1520,749 1507,749" fill="#a9a9a9" shape-rendering="auto"/><polygon points="1513.5,766 1520,754 1507,754" fill="#a9a9a9" shape-rendering="auto"/></svg>
<div class="t" style="left:1020px;top:798px;font-size:21.4px;color:#4a4a4a;font-family:'DejaVu Sans',sans-serif">Transparency</div>
<div class="abs" style="left:1194px;top:787px;width:150px;height:44px;background:#e4e4e4"></div>
<svg class="abs" style="left:1190px;top:786px" width="30" height="48" viewBox="0 0 30 48"><line x1="13" y1="2" x2="13" y2="27" stroke="#9a9a9a" stroke-width="1.6"/><polygon points="13,25 23,43 4,43" fill="#8c8c8c"/></svg>
<div class="abs" style="left:1356px;top:787px;width:93px;height:44px;background:#e6e6e6"></div>
<div class="t" style="left:1361px;top:801px;font-size:22px;color:#6c6c6c;font-family:'DejaVu Sans',sans-serif">0.0</div>
<svg class="abs" style="left:1450px;top:788px" width="20" height="42" viewBox="0 0 20 42"><polygon points="9.5,4 15,15 4,15" fill="#8a8a8a"/><polygon points="9.5,37 15,26 4,26" fill="#8a8a8a"/></svg>
<div class="t" style="left:1473px;top:797px;font-size:20px;color:#555;font-family:'DejaVu Sans',sans-serif">%</div>
<svg class="abs" style="left:1016px;top:848px" width="30" height="30" viewBox="0 0 30 30"><circle cx="14" cy="14.5" r="10.5" fill="#fff" stroke="#8a8a8a" stroke-width="3"/><polygon points="10.5,8 20,14.5 10.5,21" fill="#8a8a8a"/></svg>
<div class="t" style="left:1050px;top:852.5px;font-size:19.8px;font-weight:bold;color:#484848;font-family:'DejaVu Sans',sans-serif">Advanced Options</div>
</div></body></html>
